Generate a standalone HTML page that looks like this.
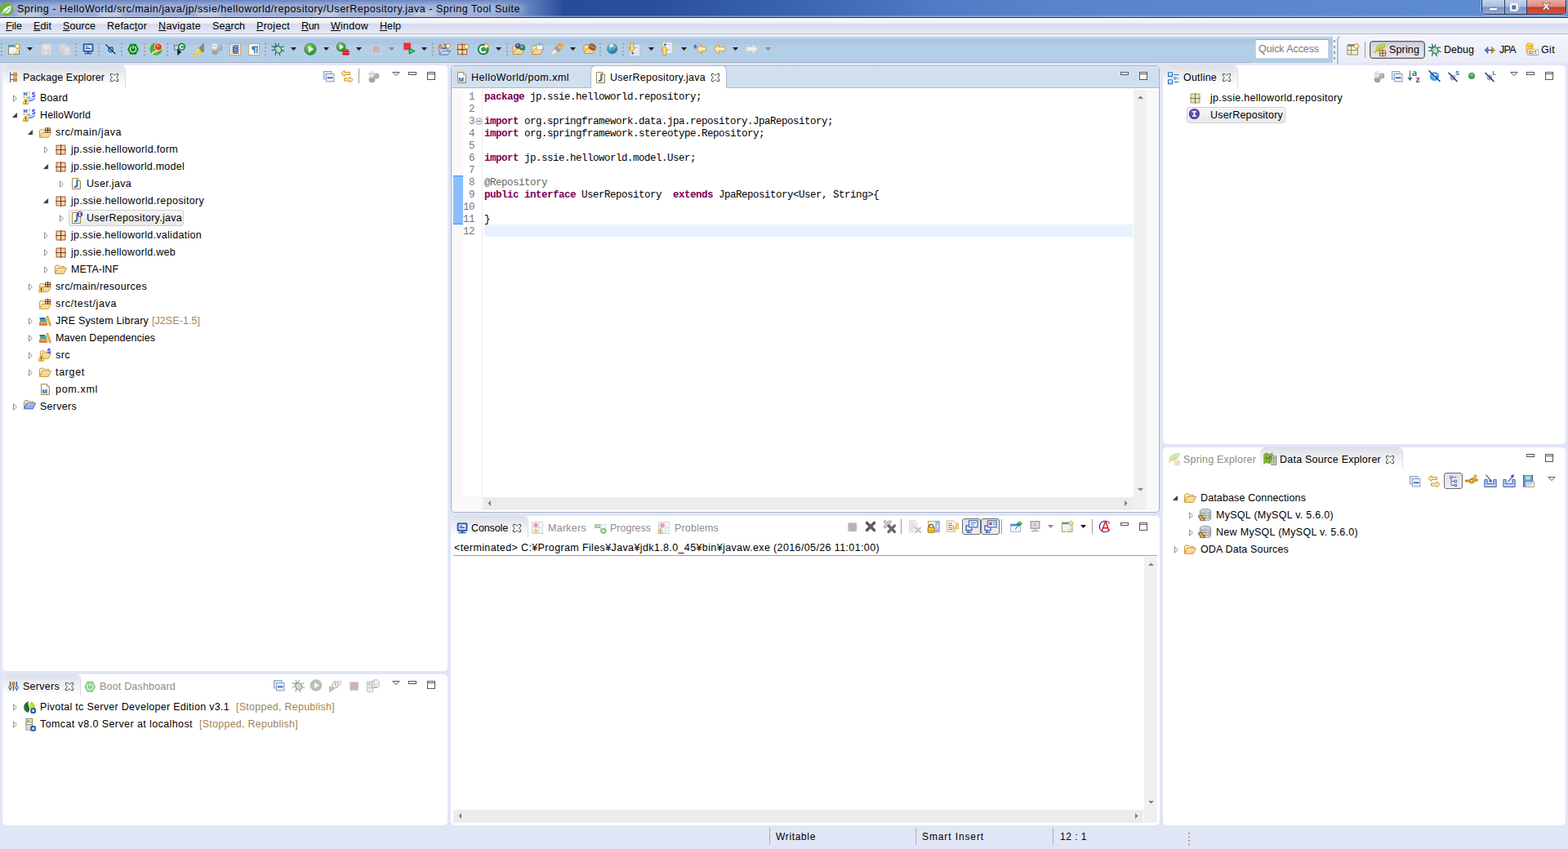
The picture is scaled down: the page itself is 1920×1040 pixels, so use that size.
<!DOCTYPE html>
<html><head><meta charset="utf-8"><title>Spring Tool Suite</title>
<style>
html,body{margin:0;padding:0}
body{width:1920px;height:1040px;overflow:hidden;background:#e1e6f6;position:relative;font-family:"Liberation Sans",sans-serif;font-size:12.5px;color:#000}
div,span,svg{position:absolute;box-sizing:border-box}
svg{overflow:visible}
.t{white-space:pre;line-height:16px;height:16px}
.t u{position:static;text-decoration:underline;text-underline-offset:1px}
.t b{position:static}
.panel{background:#fff;border-radius:5px}
.tab{background:linear-gradient(#dddfe8,#e6e8ee 25%,#f3f4f8 60%,#fff 96%);border-radius:6px 6px 0 0;box-shadow:1px 0 1px rgba(160,165,185,.4);clip-path:inset(-2px -3px 0 -3px)}
.dim{color:#8c8c8c}
.brown{color:#a08458}
.code{font-family:"Liberation Mono",monospace;font-size:12.5px;letter-spacing:-0.5px;white-space:pre;line-height:15px;height:15px;color:#000}
.code b{position:static;color:#7f0055;font-weight:bold}
.code i{position:static;color:#646464;font-style:normal}
.ln{font-family:"Liberation Mono",monospace;font-size:12.5px;letter-spacing:-0.5px;line-height:15px;height:15px;color:#787878;text-align:right;width:30px}
.sep{width:1px;background:#9a9a9a}
.hsep{width:2px;background-image:linear-gradient(#ab9f80 0 2px,transparent 2px 4.5px);background-size:2px 4.5px}

</style></head>
<body>
<div id="title" style="left:0;top:0;width:1920px;height:22px;background:linear-gradient(90deg,#8ea3d2 0,#93a8d6 600px,#5f7fbd 650px,#274c99 690px,#2a509d 800px,#3d68b3 1000px,#4f7cc4 1150px,#5885cc 1300px,#5f8dd3 1920px)"></div>
<div style="left:0;top:0;width:700px;height:7px;background:linear-gradient(rgba(70,100,175,.55),rgba(70,100,175,0));-webkit-mask-image:linear-gradient(90deg,#000 600px,transparent 690px);mask-image:linear-gradient(90deg,#000 600px,transparent 690px)"></div>
<div style="left:18px;top:5px;width:625px;height:13px;background:rgba(255,255,255,.2);filter:blur(4px)"></div>
<div style="left:22px;top:15px;width:28px;height:5px;background:rgba(255,250,225,.55);filter:blur(2.500px)"></div>
<div style="left:121px;top:15px;width:28px;height:5px;background:rgba(255,250,225,.55);filter:blur(2.500px)"></div>
<div style="left:241px;top:15px;width:28px;height:5px;background:rgba(255,250,225,.55);filter:blur(2.500px)"></div>
<div style="left:386px;top:15px;width:28px;height:5px;background:rgba(255,250,225,.55);filter:blur(2.500px)"></div>
<div style="left:506px;top:15px;width:28px;height:5px;background:rgba(255,250,225,.55);filter:blur(2.500px)"></div>
<div style="left:0;top:19px;width:1920px;height:1px;background:rgba(190,205,240,.3)"></div>
<div style="left:0;top:20px;width:1920px;height:1px;background:rgba(200,215,245,.55)"></div>
<div style="left:0;top:21px;width:1920px;height:1px;background:#1b2f5e"></div>
<svg style="left:-1px;top:2px" width="18" height="18" viewBox="0 0 18 18"><circle cx="9" cy="9" r="8.500" fill="#6db33f"/><path d="M3.800 13.200q1-6 10.700-8.200.6 6.500-3.500 8.800-3.700 1.600-7.200-.6z" fill="#fff"/><path d="M3.600 14.200q5.500-1 9.600-6.800" stroke="#6db33f" stroke-width="1.200" fill="none"/><circle cx="3.900" cy="14.100" r=".9" fill="#fff"/></svg>
<span class="t" style="left:21px;top:3px;letter-spacing:0.517px;color:#000;">Spring - HelloWorld/src/main/java/jp/ssie/helloworld/repository/UserRepository.java - Spring Tool Suite</span>
<div style="left:1814px;top:0;width:104px;height:18px;border:1px solid #1d2c52;border-top:none;border-radius:0 0 5px 5px;overflow:hidden;box-shadow:0 0 0 1px rgba(255,255,255,.45)"><div style="left:0;top:0;width:28px;height:17px;background:linear-gradient(#c5d3ec 0,#a9bde0 48%,#7c97c8 52%,#8fa9d6 100%);border-right:1px solid #2a3b66"></div><div style="left:28px;top:0;width:27px;height:17px;background:linear-gradient(#c5d3ec 0,#a9bde0 48%,#7c97c8 52%,#8fa9d6 100%);border-right:1px solid #2a3b66"></div><div style="left:55px;top:0;width:48px;height:17px;background:linear-gradient(#e9aca4 0,#d98a80 48%,#c23c2a 52%,#cf5a3e 100%)"></div></div>
<svg style="left:1823px;top:8.5px" width="11" height="5" viewBox="0 0 11 5"><rect x=".5" y=".5" width="10" height="3.400" rx=".6" fill="#fff" stroke="#5a6a8a" stroke-width=".8"/></svg>
<svg style="left:1849px;top:2px" width="12" height="12" viewBox="0 0 12 12"><rect x="3" y=".8" width="7.500" height="7.500" rx=".8" fill="none" stroke="#fff" stroke-width="1.800"/><rect x="3" y=".8" width="7.500" height="7.500" rx=".8" fill="none" stroke="#4a5a7a" stroke-width=".5"/><rect x="1" y="3.300" width="7.500" height="7.500" rx=".8" fill="#8fa8d4" stroke="#fff" stroke-width="1.900"/><rect x="3.300" y="5.600" width="3" height="3" fill="#5a76b0" stroke="#3a4a6a" stroke-width=".5"/></svg>
<svg style="left:1887px;top:2px" width="13" height="12" viewBox="0 0 13 12"><path d="M1.500 1.500h3l1.800 2.300L8.200 1.500h3L7.900 5.700l3.500 4.500h-3.100l-2-2.600-2 2.600h-3.100L4.700 5.700z" fill="#fff" stroke="#5a3a3a" stroke-width=".7"/></svg>
<div style="left:0;top:22px;width:1920px;height:19px;background:linear-gradient(#ffffff 0,#f3f4fb 4px,#eaecf7 7px,#d5d9ed 7px,#dde1f1 13px,#e5e8f6 19px)"></div>
<div style="left:0;top:41px;width:1920px;height:1px;background:#b5b8c9"></div>
<span class="t" style="left:7px;top:24px;letter-spacing:-0.035px"><u>F</u>ile</span>
<span class="t" style="left:41px;top:24px;letter-spacing:0.115px"><u>E</u>dit</span>
<span class="t" style="left:77px;top:24px;letter-spacing:0.066px"><u>S</u>ource</span>
<span class="t" style="left:131px;top:24px;letter-spacing:0.220px">Refac<u>t</u>or</span>
<span class="t" style="left:194px;top:24px;letter-spacing:0.333px"><u>N</u>avigate</span>
<span class="t" style="left:260px;top:24px;letter-spacing:0.066px">Se<u>a</u>rch</span>
<span class="t" style="left:314px;top:24px;letter-spacing:0.300px"><u>P</u>roject</span>
<span class="t" style="left:369px;top:24px;letter-spacing:-0.310px"><u>R</u>un</span>
<span class="t" style="left:405px;top:24px;letter-spacing:0.257px"><u>W</u>indow</span>
<span class="t" style="left:465px;top:24px;letter-spacing:0.073px"><u>H</u>elp</span>
<div style="left:0;top:42px;width:1632px;height:35px;background:linear-gradient(#fbfcfe 0,#e3edf7 2px,#c2d6ea 4px,#adc7e2 6px,#adc7e2 12.500px,#b3cee7 13px,#b3cee7 35px)"></div>
<div style="left:0;top:76px;width:1532px;height:1px;background:#a8afc6"></div>
<div style="left:1632px;top:42px;width:288px;height:36px;background:linear-gradient(#f4f5fb,#e9ecf7)"></div>
<div style="left:0;top:77px;width:1920px;height:3px;background:#e1e6f6"></div>
<div style="left:1537px;top:48px;width:90px;height:24px;background:#fff;border:1px solid #c9d3e2;border-top-color:#9aa7b8"></div>
<span class="t" style="left:1541px;top:52px;letter-spacing:-0.085px;color:#787878;">Quick Access</span>
<div style="left:1633px;top:48.500px;width:2px;height:24px;background-image:linear-gradient(#ab9f80 0 3px,transparent 3px 7px);background-size:2px 7px"></div>
<div style="left:1637px;top:44px;width:4px;height:34px;border-left:2px solid #a9c0e0;border-top:1px solid #a9c0e0;border-radius:4px 0 0 0"></div>
<div class="hsep" style="left:1px;top:52.500px;height:16px"></div>
<div class="hsep" style="left:92px;top:52.500px;height:16px"></div>
<div class="hsep" style="left:120px;top:52.500px;height:16px"></div>
<div class="hsep" style="left:148px;top:52.500px;height:16px"></div>
<div class="hsep" style="left:176px;top:52.500px;height:16px"></div>
<div class="hsep" style="left:204px;top:52.500px;height:16px"></div>
<div class="hsep" style="left:324px;top:52.500px;height:16px"></div>
<div class="hsep" style="left:529px;top:52.500px;height:16px"></div>
<div class="hsep" style="left:620px;top:52.500px;height:16px"></div>
<div class="hsep" style="left:734px;top:52.500px;height:16px"></div>
<div class="hsep" style="left:762px;top:52.500px;height:16px"></div>
<svg style="left:9px;top:52px" width="16" height="16" viewBox="0 0 16 16"><defs><linearGradient id="nw" x1="0" y1="0" x2="1" y2="1"><stop offset="0" stop-color="#fff"/><stop offset="1" stop-color="#d6e8fa"/></linearGradient></defs><rect x="1.5" y="3.5" width="13" height="11" fill="url(#nw)" stroke="#9a8346"/><rect x="2" y="3.5" width="9" height="2.2" fill="#3d9bdb"/><path d="M4 14.5q8-.5 10.5-7" fill="none" stroke="#efd27a" stroke-width="1.4"/><path d="M12.3 0.9999999999999996L15.9 4.6L12.3 8.2L8.700000000000001 4.6z" fill="#f3d680" stroke="#b48a22" stroke-width=".9" stroke-linejoin="round"/><path d="M12.3 2.3v4.6M10.000000000000002 4.6h4.6" stroke="#fffdf2" stroke-width="1.2"/></svg>
<svg style="left:48px;top:52px" width="16" height="16" viewBox="0 0 16 16"><g transform="translate(.6,.2)"><path d="M1.500 2.500q0-1 1-1h11q1 0 1 1v12q0 1-1 1h-11q-1 0-1-1z" fill="#dcdcdc" stroke="#c6c6c6"/><rect x="4" y="2" width="8" height="6" fill="#eeeeee" stroke="#cecece" stroke-width=".8"/><path d="M5.500 4h5M5.500 5.800h5" stroke="#d4d4d4" stroke-width=".8"/><rect x="5" y="10.500" width="6" height="4.500" fill="#e8e8e8" stroke="#c8c8c8" stroke-width=".8"/><rect x="8.200" y="11.500" width="1.500" height="2.600" fill="#c8c8c8"/></g></svg>
<svg style="left:72px;top:52px" width="16" height="16" viewBox="0 0 16 16"><g transform="translate(-.3,.8) scale(.7)"><path d="M1.500 2.500q0-1 1-1h11q1 0 1 1v12q0 1-1 1h-11q-1 0-1-1z" fill="#dcdcdc" stroke="#c6c6c6"/><rect x="4" y="2" width="8" height="6" fill="#eeeeee" stroke="#cecece" stroke-width=".8"/><path d="M5.500 4h5M5.500 5.800h5" stroke="#d4d4d4" stroke-width=".8"/><rect x="5" y="10.500" width="6" height="4.500" fill="#e8e8e8" stroke="#c8c8c8" stroke-width=".8"/><rect x="8.200" y="11.500" width="1.500" height="2.600" fill="#c8c8c8"/></g><g transform="translate(2.200,2.800) scale(.7)"><path d="M1.500 2.500q0-1 1-1h11q1 0 1 1v12q0 1-1 1h-11q-1 0-1-1z" fill="#dcdcdc" stroke="#c6c6c6"/><rect x="4" y="2" width="8" height="6" fill="#eeeeee" stroke="#cecece" stroke-width=".8"/><path d="M5.500 4h5M5.500 5.800h5" stroke="#d4d4d4" stroke-width=".8"/><rect x="5" y="10.500" width="6" height="4.500" fill="#e8e8e8" stroke="#c8c8c8" stroke-width=".8"/><rect x="8.200" y="11.500" width="1.500" height="2.600" fill="#c8c8c8"/></g><g transform="translate(4.500,4.800) scale(.7)"><path d="M1.500 2.500q0-1 1-1h11q1 0 1 1v12q0 1-1 1h-11q-1 0-1-1z" fill="#dcdcdc" stroke="#c6c6c6"/><rect x="4" y="2" width="8" height="6" fill="#eeeeee" stroke="#cecece" stroke-width=".8"/><path d="M5.500 4h5M5.500 5.800h5" stroke="#d4d4d4" stroke-width=".8"/><rect x="5" y="10.500" width="6" height="4.500" fill="#e8e8e8" stroke="#c8c8c8" stroke-width=".8"/><rect x="8.200" y="11.500" width="1.500" height="2.600" fill="#c8c8c8"/></g></svg>
<svg style="left:100px;top:52px" width="16" height="16" viewBox="0 0 16 16"><rect x="2" y="1.8" width="12" height="9.6" rx="1" fill="#2f5fae" stroke="#2a55a0" stroke-width=".8"/><rect x="3.6" y="3.3" width="8.8" height="6.4" fill="#f0f6ff"/><path d="M4.6 5.2h4M4.6 7.4h6.4" stroke="#2a3f8a" stroke-width="1.1"/><path d="M6.5 11.5h3v1.5h-3z" fill="#2f5fae"/><path d="M3.5 13.6h9" stroke="#2f5fae" stroke-width="1.4"/></svg>
<svg style="left:127px;top:52px" width="16" height="16" viewBox="0 0 16 16"><circle cx="8.6" cy="8.8" r="4.8" fill="#f4f8fc"/><circle cx="8.6" cy="8.8" r="3.3" fill="#78a8cf" stroke="#2a6a9c" stroke-width="1.3"/><path d="M2.2 2.4L14.2 14" stroke="#1d2c72" stroke-width="1.3"/></svg>
<svg style="left:155px;top:52px" width="16" height="16" viewBox="0 0 16 16"><path d="M1.2 8.2L4.6 1.8h6.8l3.4 6.4-3.4 6.6H4.6z" fill="#0b8a10"/><path d="M6 5.3a3.6 3.6 0 1 0 4 0" fill="none" stroke="#e8f6e8" stroke-width="1.2"/><path d="M8 3.6v4.2" stroke="#e8f6e8" stroke-width="1.3"/></svg>
<svg style="left:183px;top:52px" width="16" height="16" viewBox="0 0 16 16"><circle cx="8" cy="8.2" r="7.6" fill="#5aaa2e"/><path d="M3.6 11.6q5-1 9.6-5.5-1 6-5.5 7.4-2.6.6-4.1-1.900z" fill="#fff"/><path d="M4.2 13.2q5.400-.4 9-4.600" stroke="#5aaa2e" stroke-width="1.3" fill="none"/><circle cx="3.900" cy="13.200" r="1" fill="#fff"/><circle cx="11" cy="5.400" r="5" fill="#fff" opacity=".85"/><circle cx="11" cy="5.400" r="4.200" fill="#e2421c"/><circle cx="10.300" cy="4.200" r="1.800" fill="#f58a60" opacity=".8"/></svg>
<svg style="left:212px;top:52px" width="16" height="16" viewBox="0 0 16 16"><path d="M.6 3.500h6.800" stroke="#6a5aa0" stroke-width="1.100"/><path d="M1.600 3.800v5.400h5v-5.400" fill="#c8d8f0" stroke="#6a5aa0"/><path d="M2.500 2.500h3.200" stroke="#d8b0b0" stroke-width="1.100"/><path d="M5.200 7.500l5 4.300-5 4.300z" fill="#222"/><circle cx="10.500" cy="5.300" r="4.500" fill="#157a3a"/><circle cx="10.500" cy="5.300" r="3.300" fill="#39a85c"/><path d="M12.400 4.200a2.200 2.200 0 1 0 0 2.300" fill="none" stroke="#fff" stroke-width="1.300"/></svg>
<svg style="left:234px;top:52px" width="16" height="16" viewBox="0 0 16 16"><path d="M9.500 6.800L15.700.2l.3 10.800-3.200 1.200z" fill="#8c866c"/><path d="M12 5l2.500 3" stroke="#a8a490" stroke-width=".8"/><path d="M9.300 6.800l3.600 5.200-2.600 2.400-5.800.2z" fill="#f1d22c"/><path d="M9.400 7.800l-3.600 5.600" stroke="#f8e878" stroke-width="1.200"/><path d="M.2 14.800q3-1 5.800-.4l3 .2" stroke="#e8c820" stroke-width="1.300" fill="none"/></svg>
<svg style="left:258px;top:52px" width="16" height="16" viewBox="0 0 16 16"><circle cx="5.200" cy="5" r="3.600" fill="#ebebeb" stroke="#d8d8d8" stroke-width=".6"/><path d="M3.200 4.400h3.400" stroke="#b8b8b8"/><circle cx="11" cy="7" r="3.400" fill="#a9a9a9"/><circle cx="10.300" cy="5.800" r="1.500" fill="#c4c4c4"/><circle cx="5.500" cy="11.500" r="3.800" fill="#a2a2a2"/><path d="M3.500 9.300q2-1.500 4 0" stroke="#e4e4e4" stroke-width="1.200" fill="none"/></svg>
<svg style="left:280px;top:52px" width="16" height="16" viewBox="0 0 16 16"><rect x="1.500" y="1.500" width="13" height="14" fill="#fbfbfd" stroke="#c3ad6c" stroke-width="1.100"/><path d="M3.500 3.500h1M3.500 6h1M3.500 8.500h1M3.500 11h1M3.500 13.500h1M12 6h1M12 8.500h1M12 11h1" stroke="#2d4a9c" stroke-width="1.100"/><path d="M5.500 3.500h7.500M5.500 13.500h7.500" stroke="#5470b8" stroke-width="1.100"/><rect x="5.800" y="5.300" width="5" height="6.600" fill="#b9c9ea" stroke="#25408c" stroke-width="1.300"/><path d="M6.500 7.500h3.600M6.500 9.600h3.600" stroke="#25408c" stroke-width=".9"/></svg>
<svg style="left:303px;top:52px" width="16" height="16" viewBox="0 0 16 16"><rect x="1.500" y="1.500" width="13" height="14" fill="#fafcff" stroke="#c3ad6c" stroke-width="1.100"/><path d="M13 4.600H7.400a2.400 2.400 0 0 0 0 4.800H8V13.600h1.600V6h1.300v7.600h1.600V6H13z" fill="#3f7fc4"/></svg>
<svg style="left:332px;top:52px" width="16" height="16" viewBox="0 0 16 16"><path d="M5 1l1.200 3M9.300 1.400l-.8 2.600M.8 4.600l3.600 1M1.200 9.600l3.400-.8M12 5.300l3.200-.2M12.600 9l3 1.600M5.600 12l-.4 3.400M9.300 12.700l1.600 3" stroke="#225e5a" stroke-width="1.100" fill="none" stroke-linecap="round"/><ellipse cx="8.600" cy="8.600" rx="3.600" ry="4.700" transform="rotate(-38 8.600 8.600)" fill="#b4dba0" stroke="#26767a" stroke-width="1.200"/><path d="M7.300 7.200l3 3.600M9 6l2.400 3" stroke="#e0f2d4" stroke-width=".9"/><circle cx="5.800" cy="5" r="1.400" fill="#26767a"/></svg>
<svg style="left:372px;top:52px" width="16" height="16" viewBox="0 0 16 16"><defs><radialGradient id="rg" cx=".4" cy=".3" r=".8"><stop offset="0" stop-color="#8fd46a"/><stop offset=".6" stop-color="#3fa83c"/><stop offset="1" stop-color="#1f8a34"/></radialGradient></defs><circle cx="8" cy="8.300" r="7" fill="url(#rg)" stroke="#1c7c36" stroke-width=".8"/><path d="M5.800 4.300L12 8.300 5.800 12.400z" fill="#fff"/></svg>
<svg style="left:412px;top:52px" width="16" height="16" viewBox="0 0 16 16"><defs><radialGradient id="rg2" cx=".4" cy=".3" r=".8"><stop offset="0" stop-color="#8fd46a"/><stop offset=".6" stop-color="#3fa83c"/><stop offset="1" stop-color="#1f8a34"/></radialGradient></defs><circle cx="5.600" cy="5.600" r="5.400" fill="url(#rg2)" stroke="#1c7c36" stroke-width=".7"/><path d="M4 2.600L8.800 5.600 4 8.600z" fill="#fff"/><rect x="7.300" y="9.800" width="8.400" height="5.600" rx=".8" fill="#e21a1a"/><path d="M9.600 9.800v-1.300h3.800v1.300" fill="none" stroke="#e21a1a" stroke-width="1.100"/><path d="M7.300 12.300h8.400" stroke="#f8a0a0" stroke-width=".8"/><path d="M8.500 11h6M8.500 13.800h6" stroke="#a80c0c" stroke-width=".6"/></svg>
<svg style="left:453px;top:52px" width="16" height="16" viewBox="0 0 16 16"><rect x="2.600" y="3.600" width="10" height="10" fill="#c9b3bb" stroke="#dccfd0" stroke-width="1.200"/></svg>
<svg style="left:493px;top:52px" width="16" height="16" viewBox="0 0 16 16"><rect x="1.300" y=".5" width="8.600" height="8.600" rx=".8" fill="#e8202c" stroke="#f07078" stroke-width=".9"/><rect x="3" y="2.200" width="5.200" height="5.200" fill="#f04050" opacity=".6"/><path d="M8 6.800l7.200 3.700-7.200 3.700z" fill="#22a048" stroke="#15803a" stroke-width=".7"/><path d="M9.300 8.800l3.500 1.800-3.500 1.800z" fill="#6fd088"/></svg>
<svg style="left:536px;top:52px" width="16" height="16" viewBox="0 0 16 16"><path d="M2 13.800V9l1.500-1.200h8.500v2" fill="#fbe9b0" stroke="#4a66c0" stroke-width=".9"/><path d="M2 15l3-4.600h10.700l-3.300 4.600z" fill="#b9d6f6" stroke="#4a66c0" stroke-width=".9" stroke-linejoin="round"/><text x="-.2" y="8.200" font-family="Liberation Sans,sans-serif" font-weight="bold" font-size="9.500" fill="#e06a10">A</text><text x="5.600" y="8.200" font-family="Liberation Sans,sans-serif" font-weight="bold" font-size="9.500" fill="#1f5fb0">J</text><path d="M12.6 0.8999999999999999L16.0 4.3L12.6 7.699999999999999L9.2 4.3z" fill="#f3d680" stroke="#b48a22" stroke-width=".9" stroke-linejoin="round"/><path d="M12.6 2.2v4.199999999999999M10.5 4.3h4.199999999999999" stroke="#fffdf2" stroke-width="1.2"/></svg>
<svg style="left:560px;top:52px" width="16" height="16" viewBox="0 0 16 16"><rect x=".6" y="2.600" width="11" height="12" fill="#e9c48e" stroke="#b0623e"/><rect x="1.600" y="3.600" width="4" height="4.500" fill="#f3dcae"/><rect x="6.600" y="3.600" width="4" height="4.500" fill="#f3dcae"/><rect x="1.600" y="9.100" width="4" height="4.500" fill="#f3dcae"/><rect x="6.600" y="9.100" width="4" height="4.500" fill="#f3dcae"/><path d="M6.100 1.500v14M-.5 8.600h12.500" stroke="#7a3a2a" stroke-width="1.100"/><path d="M11.4 1.5L14.9 5L11.4 8.5L7.9 5z" fill="#f3d680" stroke="#b48a22" stroke-width=".9" stroke-linejoin="round"/><path d="M11.4 2.8v4.4M9.200000000000001 5h4.4" stroke="#fffdf2" stroke-width="1.2"/></svg>
<svg style="left:584px;top:52px" width="16" height="16" viewBox="0 0 16 16"><circle cx="7.700" cy="8.500" r="6.800" fill="#127a36"/><circle cx="7.700" cy="8.500" r="5.600" fill="#2f9f52"/><path d="M10.600 6.400a3.700 3.700 0 1 0 0 4.200" fill="none" stroke="#fff" stroke-width="2.100"/><path d="M11.4 1.0L14.9 4.5L11.4 8.0L7.9 4.5z" fill="#f3d680" stroke="#b48a22" stroke-width=".9" stroke-linejoin="round"/><path d="M11.4 2.3v4.4M9.200000000000001 4.5h4.4" stroke="#fffdf2" stroke-width="1.2"/></svg>
<svg style="left:627px;top:52px" width="16" height="16" viewBox="0 0 16 16"><path d="M1 12.500V5.500l1.200-1.300h3.600l1.200 1.300h5.500v2" fill="#fbe6a8" stroke="#cf8e2e"/><path d="M1 14.500L4.600 8h11l-3.800 6.500z" fill="#f8d88a" stroke="#cf8e2e" stroke-linejoin="round"/><path d="M5.200 9h9" stroke="#fdf0c8"/><circle cx="7.300" cy="4.300" r="3.400" fill="#5a3fa0"/><circle cx="6.800" cy="3.300" r="1.600" fill="#9a86d0"/><circle cx="12.500" cy="6.200" r="3.600" fill="#1f8a4a"/><circle cx="12" cy="5.200" r="1.700" fill="#6cc890"/></svg>
<svg style="left:650px;top:52px" width="16" height="16" viewBox="0 0 16 16"><path d="M1 12.500V5.500l1.200-1.300h3.600l1.200 1.300h5.500v2" fill="#fbe6a8" stroke="#cf8e2e"/><path d="M1 14.500L4.600 8h11l-3.800 6.500z" fill="#f8d88a" stroke="#cf8e2e" stroke-linejoin="round"/><path d="M5.200 9h9" stroke="#fdf0c8"/><rect x="7" y="2.500" width="7.500" height="6.500" fill="#f2f6fc" stroke="#8aa0c0" stroke-width=".9"/><rect x="9" y="1" width="3.400" height="2.200" fill="#b8c6e0" stroke="#7f90b4" stroke-width=".7"/></svg>
<svg style="left:674px;top:52px" width="16" height="16" viewBox="0 0 16 16"><path d="M.6 14.200L5.500 8l3.400 3.600-6 3.600z" fill="#fff6c8"/><path d="M.6 14.200l2.200 1 6-3.600" fill="#f0c040" opacity=".6"/><path d="M5 7.600l2.600-2.800 4.400 4.400-2.800 2.600z" fill="#a7a0a6" stroke="#857e86" stroke-width=".7"/><path d="M7.600 4.800L12.300.8l3.300 1.400.2 2.400-3.800 4.600z" fill="#f4c254" stroke="#c88a20" stroke-width=".8"/><path d="M11.300 3.300l1.200 1" stroke="#2a50b0" stroke-width="1.300"/></svg>
<svg style="left:714px;top:52px" width="16" height="16" viewBox="0 0 16 16"><path d="M1 11.500V4.500l1.200-1.300h3.600l1.200 1.300h5.500v2" fill="#fbe6a8" stroke="#cf8e2e"/><path d="M1 13.500L4.600 7h11l-3.800 6.500z" fill="#f8d88a" stroke="#cf8e2e" stroke-linejoin="round"/><ellipse cx="11.200" cy="5.600" rx="4.300" ry="3.500" transform="rotate(25 11.200 5.600)" fill="#9c6038" stroke="#7a4524" stroke-width=".7"/><path d="M7.600 4.600q3.600-.6 7 2.600" stroke="#d8a878" stroke-width="1" fill="none"/></svg>
<svg style="left:742px;top:52px" width="16" height="16" viewBox="0 0 16 16"><defs><radialGradient id="gl" cx=".4" cy=".35" r=".75"><stop offset="0" stop-color="#7fd0f4"/><stop offset=".6" stop-color="#2a8ad0"/><stop offset="1" stop-color="#1a4fa0"/></radialGradient></defs><circle cx="7.600" cy="7.600" r="6.600" fill="url(#gl)" stroke="#c8b890" stroke-width=".6"/><path d="M4.300 3q2-1.600 4.600-1 1 1.600-.4 2.600l1.600 1.200-1 2.400-1.500-.3-1.100-2-2.600-.6z" fill="#d8f0d0"/><path d="M7.300 5.200l2.200 1-.6 3-1.400 1.600-.8-3z" fill="#4aa83a"/><circle cx="7.800" cy="10.300" r=".8" fill="#e02020"/><path d="M10.500 3.500l1.500 1.700-.8 1.300" fill="#c8ecc0"/></svg>
<svg style="left:769px;top:52px" width="16" height="16" viewBox="0 0 16 16"><rect x="2.800" y="3.300" width="12" height="12.400" fill="#f1f4f9"/><path d="M14.800 3.300v12.400" stroke="#c9ba86" stroke-width=".9"/><path d="M9.500 5.500h4M10 8h4M8.500 10.500h2.500M11.800 10.500h2.200M8.500 13.300h5.500" stroke="#c6cfe0" stroke-width="1"/><rect x="4.300" y="12.300" width="3" height="2" fill="#2f5fb0"/><path d="M3.400.7h3.400v5.500h2.800L5.100 11.800.6 6.200h2.800z" fill="#fbd66a" stroke="#cf8e20" stroke-width=".9" stroke-linejoin="round"/><path d="M4.400 1.500v5.400" stroke="#fff3c0" stroke-width="1"/></svg>
<svg style="left:808px;top:52px" width="16" height="16" viewBox="0 0 16 16"><rect x="3.300" y=".3" width="12" height="12.400" fill="#f1f4f9"/><path d="M3.300 .3v12.400M15.300 .3v12.400" stroke="#c9ba86" stroke-width=".9"/><rect x="5" y="1.600" width="3" height="2" fill="#2f5fb0"/><path d="M9.500 2.600h4.500M9.500 5.200h2M12.500 5.200h1.500M11 7.800h3M12 10.300h2" stroke="#c6cfe0" stroke-width="1"/><path d="M4.200 15.500h3.400v-5.700h2.800L5.900 4.300 1.400 9.800h2.800z" fill="#fbd66a" stroke="#cf8e20" stroke-width=".9" stroke-linejoin="round"/><path d="M5.200 14.600v-6.500" stroke="#fff3c0" stroke-width="1"/></svg>
<svg style="left:849px;top:52px" width="16" height="16" viewBox="0 0 16 16"><path d="M4.3 8.200L9.8 2.400v3.300h5.5v5H9.8V14z" fill="#fde7a2" stroke="#d6962a" stroke-width="1" stroke-linejoin="round"/><path d="M8 7h6.5" stroke="#fff8dc" stroke-width="1.200"/><path d="M2.400 2.300v5.400M.2 3.600l4.400 2.800M.2 6.400L4.600 3.600" stroke="#2a5fc0" stroke-width=".9"/></svg>
<svg style="left:873px;top:52px" width="16" height="16" viewBox="0 0 16 16"><path d="M1.2 8.200L7.2 2.400v3.300h7.8v5H7.2V14z" fill="#fde7a2" stroke="#d6962a" stroke-width="1" stroke-linejoin="round"/><path d="M5.5 7h8.5" stroke="#fff8dc" stroke-width="1.200"/></svg>
<svg style="left:913px;top:52px" width="16" height="16" viewBox="0 0 16 16"><g transform="translate(16,0) scale(-1,1)"><path d="M1.2 8.200L7.2 2.400v3.300h7.8v5H7.2V14z" fill="#ececec" stroke="#d2d2d2" stroke-width="1" stroke-linejoin="round"/><path d="M5.5 7h8.5" stroke="#fafafa" stroke-width="1.200"/></g></svg>
<svg style="left:33px;top:58px" width="7" height="4" viewBox="0 0 7 4"><path d="M0 0h7L3.5 4z" fill="#1a1a1a"/></svg>
<svg style="left:356px;top:58px" width="7" height="4" viewBox="0 0 7 4"><path d="M0 0h7L3.5 4z" fill="#1a1a1a"/></svg>
<svg style="left:396px;top:58px" width="7" height="4" viewBox="0 0 7 4"><path d="M0 0h7L3.5 4z" fill="#1a1a1a"/></svg>
<svg style="left:436px;top:58px" width="7" height="4" viewBox="0 0 7 4"><path d="M0 0h7L3.5 4z" fill="#1a1a1a"/></svg>
<svg style="left:516px;top:58px" width="7" height="4" viewBox="0 0 7 4"><path d="M0 0h7L3.5 4z" fill="#1a1a1a"/></svg>
<svg style="left:607px;top:58px" width="7" height="4" viewBox="0 0 7 4"><path d="M0 0h7L3.5 4z" fill="#1a1a1a"/></svg>
<svg style="left:698px;top:58px" width="7" height="4" viewBox="0 0 7 4"><path d="M0 0h7L3.5 4z" fill="#1a1a1a"/></svg>
<svg style="left:794px;top:58px" width="7" height="4" viewBox="0 0 7 4"><path d="M0 0h7L3.5 4z" fill="#1a1a1a"/></svg>
<svg style="left:834px;top:58px" width="7" height="4" viewBox="0 0 7 4"><path d="M0 0h7L3.5 4z" fill="#1a1a1a"/></svg>
<svg style="left:897px;top:58px" width="7" height="4" viewBox="0 0 7 4"><path d="M0 0h7L3.5 4z" fill="#1a1a1a"/></svg>
<svg style="left:476px;top:58px" width="7" height="4" viewBox="0 0 7 4"><path d="M0 0h7L3.5 4z" fill="#8a8a8a"/></svg>
<svg style="left:937px;top:58px" width="7" height="4" viewBox="0 0 7 4"><path d="M0 0h7L3.5 4z" fill="#8a8a8a"/></svg>
<svg style="left:1649px;top:52px" width="16" height="16" viewBox="0 0 16 16"><rect x="1" y="2.500" width="12.500" height="12.500" rx="1" fill="#eef5fc" stroke="#a58a48" stroke-width="1.100"/><rect x="1.500" y="3" width="8" height="2" fill="#4a9adc"/><path d="M5.500 5v10M1 9.500h12.500" stroke="#a58a48" stroke-width="1"/><path d="M7 13.500l4-3.500" stroke="#efd27a" stroke-width="1"/><path d="M11.8 0.8999999999999999L15.4 4.5L11.8 8.1L8.200000000000001 4.5z" fill="#f3d680" stroke="#b48a22" stroke-width=".9" stroke-linejoin="round"/><path d="M11.8 2.2v4.6M9.500000000000002 4.5h4.6" stroke="#fffdf2" stroke-width="1.2"/></svg>
<div class="sep" style="left:1671px;top:51px;height:20px;background:#9a9aa6"></div>
<div style="left:1677px;top:50px;width:68px;height:22px;border:1px solid #5c5c5c;border-radius:4px;box-shadow:inset 0 0 0 .5px #8a8a8a;background:linear-gradient(#cdcdd4,#dedee5 45%,#e6e6ee)"></div>
<svg style="left:1682px;top:53px" width="16" height="16" viewBox="0 0 16 16"><path d="M2.500 9.500q-.8-5 4-7.800 4-1.900 8.500-.9-.5 5.200-4.500 7.600-4.500 2.400-8 1.100z" fill="#a9d14c"/><path d="M4 8q3-4.500 9-6" stroke="#c8e47a" stroke-width="1" fill="none"/><path d="M.5 12l8-6.500" stroke="#e78f3a" stroke-width="1.200"/><rect x="7.500" y="9" width="7" height="6.500" fill="#f3dcae" stroke="#b0623e" stroke-width=".9"/><path d="M11 8v8.500M6.500 12.300h9" stroke="#8a4a2a" stroke-width="1.100"/></svg>
<span class="t" style="left:1701px;top:53px;letter-spacing:0.145px;">Spring</span>
<svg style="left:1749px;top:53px" width="16" height="16" viewBox="0 0 16 16"><g transform="translate(-.5,0)"><path d="M5 1l1.200 3M9.300 1.400l-.8 2.600M.8 4.600l3.600 1M1.200 9.600l3.400-.8M12 5.300l3.200-.2M12.600 9l3 1.600M5.600 12l-.4 3.400M9.300 12.700l1.600 3" stroke="#225e5a" stroke-width="1.100" fill="none" stroke-linecap="round"/><ellipse cx="8.600" cy="8.600" rx="3.600" ry="4.700" transform="rotate(-38 8.600 8.600)" fill="#b4dba0" stroke="#26767a" stroke-width="1.200"/><path d="M7.300 7.200l3 3.600M9 6l2.400 3" stroke="#e0f2d4" stroke-width=".9"/><circle cx="5.800" cy="5" r="1.400" fill="#26767a"/></g></svg>
<span class="t" style="left:1768px;top:53px;letter-spacing:0.034px;">Debug</span>
<svg style="left:1817px;top:53px" width="15" height="16" viewBox="0 0 15 16"><path d="M5 4.500L.8 8.500 5 12.500z" fill="#5a8acc" stroke="#2a5a9c" stroke-width=".7"/><path d="M9.500 4.500l4.200 4-4.200 4z" fill="#d9a044" stroke="#a8701a" stroke-width=".7"/><path d="M4 8.500h7" stroke="#2a4a8a" stroke-width="1.200"/></svg>
<span class="t" style="left:1836px;top:53px;letter-spacing:-0.666px;">JPA</span>
<svg style="left:1868px;top:52px" width="17" height="17" viewBox="0 0 17 17"><path d="M1 2.500v10h8v-10" fill="#f2c436" stroke="#c89a1a" stroke-width=".7"/><ellipse cx="5" cy="2.500" rx="4" ry="1.700" fill="#fbe070" stroke="#c89a1a" stroke-width=".7"/><path d="M2.500 4.500v7" stroke="#fbe68a" stroke-width="1.500"/><rect x="2.500" y="8.500" width="13" height="7" fill="#fcfcfc" stroke="#a8b0c0" stroke-width=".8"/><path d="M2.500 15.200h13" stroke="#9aa8c0" stroke-width="1.200"/><text x="3.700" y="14" font-family="Liberation Sans,sans-serif" font-weight="bold" font-size="5.500" fill="#555">G</text><text x="8.200" y="14" font-family="Liberation Sans,sans-serif" font-weight="bold" font-size="5.500" fill="#d03030">I</text><text x="10.300" y="14" font-family="Liberation Sans,sans-serif" font-weight="bold" font-size="5.500" fill="#2a9a3a">T</text></svg>
<span class="t" style="left:1887px;top:53px;letter-spacing:0.342px;">Git</span>
<div class="panel" style="left:3px;top:80px;width:545px;height:742px"></div>
<div class="tab" style="left:3px;top:80px;width:150px;height:27px"></div>
<svg style="left:10px;top:88px" width="16" height="16" viewBox="0 0 16 16"><path d="M2.500 0v13M3 3.500h3M3 9.500h3" stroke="#5a6070" fill="none"/><rect x="6" y="1" width="5" height="5" fill="#c27532"/><rect x="6" y="7" width="5" height="5" fill="#c27532"/><path d="M7.500 2.500h.01M9.500 2.500h.01M7.500 4.500h.01M9.500 4.500h.01M7.500 8.500h.01M9.500 8.500h.01M7.500 10.500h.01M9.500 10.500h.01" stroke="#f6dcae" stroke-width="1.100" stroke-linecap="square"/></svg>
<span class="t" style="left:28px;top:87px;letter-spacing:0.084px;">Package Explorer</span>
<svg style="left:135px;top:90px" width="10" height="10" viewBox="0 0 10 10"><path d="M.5 .5h2.600l2 2 2-2h2.400v2.500l-2 2 2 2v2.500h-2.400l-2-2-2 2H.5v-2.500l2-2-2-2z" fill="#fff" stroke="#4a4a4a" stroke-width="1" stroke-linejoin="round"/></svg>
<svg style="left:396px;top:87px" width="14" height="14" viewBox="0 0 14 14"><rect x=".5" y=".5" width="9.500" height="9.500" fill="#dbe7f3" stroke="#8f9fc6"/><rect x="3.500" y="3.500" width="9.500" height="9.500" fill="#e3f0f4" stroke="#8f9fc6"/><path d="M5 8.300h6.500" stroke="#103f95" stroke-width="1.300"/></svg>
<svg style="left:417px;top:86px" width="16" height="16" viewBox="0 0 16 16"><path d="M.8 4L4.800 .5v2h6.700v3H4.800v2z" fill="#fdf0c0" stroke="#d09422" stroke-width="1" stroke-linejoin="round"/><path d="M15.200 11.500L11.200 8v2H4.500v3h6.700v2z" fill="#fdf0c0" stroke="#d09422" stroke-width="1" stroke-linejoin="round"/></svg>
<div class="sep" style="left:439px;top:84px;height:18px"></div>
<svg style="left:450px;top:86px" width="16" height="16" viewBox="0 0 16 16"><circle cx="5.200" cy="5" r="3.600" fill="#ebebeb" stroke="#d8d8d8" stroke-width=".6"/><path d="M3.200 4.400h3.400" stroke="#b8b8b8"/><circle cx="11" cy="7" r="3.400" fill="#a9a9a9"/><circle cx="10.300" cy="5.800" r="1.500" fill="#c4c4c4"/><circle cx="5.500" cy="11.500" r="3.800" fill="#a2a2a2"/><path d="M3.500 9.300q2-1.500 4 0" stroke="#e4e4e4" stroke-width="1.200" fill="none"/></svg>
<svg style="left:480px;top:88px" width="10" height="6" viewBox="0 0 10 6"><path d="M.8 .5h8.400L5 4.600z" fill="#fff" stroke="#555" stroke-width="1" stroke-linejoin="round"/></svg>
<svg style="left:500px;top:88px" width="10" height="4" viewBox="0 0 10 4"><rect x=".5" y=".5" width="9" height="3" fill="#fff" stroke="#555"/></svg>
<svg style="left:523px;top:88px" width="10" height="10" viewBox="0 0 10 10"><rect x=".5" y=".5" width="9" height="9" fill="#fff" stroke="#555"/><path d="M1 2.500h8" stroke="#555"/></svg>
<svg style="left:15px;top:116px" width="7" height="9" viewBox="0 0 7 9"><path d="M1.5 .8v7.4L5.3 4.5z" fill="#fff" stroke="#8c8c8c" stroke-width="1"/></svg>
<svg style="left:28px;top:111px" width="16" height="16" viewBox="0 0 16 16"><path d="M7 2.700h2v4.500H7z" fill="#fbe3a0"/><path d="M2.300 7.300h3v2h-3z" fill="#fbe3a0"/><path d="M1.300 7.200v1.600" stroke="#2a5ab0" stroke-width=".9"/><path d="M7.600 1.200l1.200 1.600" stroke="#6a7a9a" stroke-width=".9"/><path d="M5 8.700l3.500-1.200.5 1 6 .5-3.600 3.800H7z" fill="#a9d0f7"/><path d="M5 8.700l3.500-1.200" stroke="#4a78c8" stroke-width=".8" fill="none"/><path d="M7 12.600h4.400L15 9" stroke="#3458c6" stroke-width=".9" fill="none"/><text transform="translate(.6,5.800) scale(1.180,1)" font-family="Liberation Sans,sans-serif" font-weight="bold" font-size="5.300" fill="#0f5a96">M</text><text transform="translate(10.700,7.900) scale(.680,1)" font-family="Liberation Sans,sans-serif" font-weight="bold" font-size="9.700" fill="#0000f0">S</text><g transform="translate(0,9.300)"><path d="M3.500 .6Q4.200 .6 4.600 1.500L6.800 6q.5 1.600-1 1.600H1.200q-1.500 0-1-1.600L2.400 1.500Q2.800 .6 3.500 .6z" fill="#f6c860" stroke="#d99a3a" stroke-width=".8"/><path d="M3.500 2.300v2.700M3.500 5.800v1" stroke="#5a3208" stroke-width="1.100"/></g></svg>
<span class="t" style="left:49px;top:112px;letter-spacing:0.129px;">Board</span>
<svg style="left:15px;top:138px" width="7" height="7" viewBox="0 0 7 7"><path d="M5.700 .6v5.100H.6z" fill="#3a3a3a" stroke="#262626" stroke-width=".6" stroke-linejoin="round"/></svg>
<svg style="left:28px;top:132px" width="16" height="16" viewBox="0 0 16 16"><path d="M7 2.700h2v4.500H7z" fill="#fbe3a0"/><path d="M2.300 7.300h3v2h-3z" fill="#fbe3a0"/><path d="M1.300 7.200v1.600" stroke="#2a5ab0" stroke-width=".9"/><path d="M7.600 1.200l1.200 1.600" stroke="#6a7a9a" stroke-width=".9"/><path d="M5 8.700l3.500-1.200.5 1 6 .5-3.600 3.800H7z" fill="#a9d0f7"/><path d="M5 8.700l3.500-1.200" stroke="#4a78c8" stroke-width=".8" fill="none"/><path d="M7 12.600h4.400L15 9" stroke="#3458c6" stroke-width=".9" fill="none"/><text transform="translate(.6,5.800) scale(1.180,1)" font-family="Liberation Sans,sans-serif" font-weight="bold" font-size="5.300" fill="#0f5a96">M</text><text transform="translate(10.700,7.900) scale(.680,1)" font-family="Liberation Sans,sans-serif" font-weight="bold" font-size="9.700" fill="#0000f0">S</text><g transform="translate(0,9.300)"><path d="M3.500 .6Q4.200 .6 4.600 1.500L6.800 6q.5 1.600-1 1.600H1.200q-1.500 0-1-1.600L2.400 1.500Q2.800 .6 3.500 .6z" fill="#f6c860" stroke="#d99a3a" stroke-width=".8"/><path d="M3.500 2.300v2.700M3.500 5.800v1" stroke="#5a3208" stroke-width="1.100"/></g></svg>
<span class="t" style="left:49px;top:133px;letter-spacing:0.110px;">HelloWorld</span>
<svg style="left:34px;top:159px" width="7" height="7" viewBox="0 0 7 7"><path d="M5.700 .6v5.100H.6z" fill="#3a3a3a" stroke="#262626" stroke-width=".6" stroke-linejoin="round"/></svg>
<svg style="left:47px;top:153px" width="16" height="16" viewBox="0 0 16 16"><path d="M1.500 14.500V7l1.200-1.400h3.600l1.200 1.400h5v2" fill="#fbeec4" stroke="#cf9a40"/><path d="M1.500 15.300L4.600 9.500h10.900l-3.300 5.800z" fill="#f8de98" stroke="#cf9a40" stroke-linejoin="round"/><rect x="8.500" y="4" width="6" height="5" fill="#ecc894" stroke="#8a5a44" stroke-width=".9"/><path d="M11.500 2.800v7M7.500 6.500h8" stroke="#6a3a2c" stroke-width="1"/></svg>
<span class="t" style="left:68px;top:154px;letter-spacing:0.567px;">src/main/java</span>
<svg style="left:53px;top:179px" width="7" height="9" viewBox="0 0 7 9"><path d="M1.5 .8v7.4L5.3 4.5z" fill="#fff" stroke="#8c8c8c" stroke-width="1"/></svg>
<svg style="left:66px;top:174px" width="16" height="16" viewBox="0 0 16 16"><rect x="3" y="4" width="11" height="11" fill="#e3b982" stroke="#b0623e"/><rect x="4" y="5" width="4" height="4" fill="#f1d8a8"/><rect x="9" y="5" width="4" height="4" fill="#f1d8a8"/><rect x="4" y="10" width="4" height="4" fill="#f1d8a8"/><rect x="9" y="10" width="4" height="4" fill="#f1d8a8"/><path d="M8.500 3v13M2 9.500h13" stroke="#7a3a2a" stroke-width="1.100"/></svg>
<span class="t" style="left:87px;top:175px;letter-spacing:0.320px;">jp.ssie.helloworld.form</span>
<svg style="left:53px;top:201px" width="7" height="7" viewBox="0 0 7 7"><path d="M5.700 .6v5.100H.6z" fill="#3a3a3a" stroke="#262626" stroke-width=".6" stroke-linejoin="round"/></svg>
<svg style="left:66px;top:195px" width="16" height="16" viewBox="0 0 16 16"><rect x="3" y="4" width="11" height="11" fill="#e3b982" stroke="#b0623e"/><rect x="4" y="5" width="4" height="4" fill="#f1d8a8"/><rect x="9" y="5" width="4" height="4" fill="#f1d8a8"/><rect x="4" y="10" width="4" height="4" fill="#f1d8a8"/><rect x="9" y="10" width="4" height="4" fill="#f1d8a8"/><path d="M8.500 3v13M2 9.500h13" stroke="#7a3a2a" stroke-width="1.100"/></svg>
<span class="t" style="left:87px;top:196px;letter-spacing:0.263px;">jp.ssie.helloworld.model</span>
<svg style="left:72px;top:221px" width="7" height="9" viewBox="0 0 7 9"><path d="M1.5 .8v7.4L5.3 4.5z" fill="#fff" stroke="#8c8c8c" stroke-width="1"/></svg>
<svg style="left:85px;top:216px" width="16" height="16" viewBox="0 0 16 16"><defs><linearGradient id="pg" x1="0" y1="0" x2="1" y2="1"><stop offset=".3" stop-color="#fff"/><stop offset="1" stop-color="#cfe0f5"/></linearGradient></defs><path d="M3.5 2.5h7l3 3v10h-10z" fill="url(#pg)" stroke="#a88a3c"/><path d="M10.5 2.5v3h3" fill="#f2e2b0" stroke="#a88a3c" stroke-width=".8"/><path d="M9.3 4.2v6.3q0 2.4-2.4 2.4h-1" fill="none" stroke="#3b6db0" stroke-width="2"/></svg>
<span class="t" style="left:106px;top:217px;letter-spacing:0.322px;">User.java</span>
<svg style="left:53px;top:243px" width="7" height="7" viewBox="0 0 7 7"><path d="M5.700 .6v5.100H.6z" fill="#3a3a3a" stroke="#262626" stroke-width=".6" stroke-linejoin="round"/></svg>
<svg style="left:66px;top:237px" width="16" height="16" viewBox="0 0 16 16"><rect x="3" y="4" width="11" height="11" fill="#e3b982" stroke="#b0623e"/><rect x="4" y="5" width="4" height="4" fill="#f1d8a8"/><rect x="9" y="5" width="4" height="4" fill="#f1d8a8"/><rect x="4" y="10" width="4" height="4" fill="#f1d8a8"/><rect x="9" y="10" width="4" height="4" fill="#f1d8a8"/><path d="M8.500 3v13M2 9.500h13" stroke="#7a3a2a" stroke-width="1.100"/></svg>
<span class="t" style="left:87px;top:238px;letter-spacing:0.327px;">jp.ssie.helloworld.repository</span>
<div style="left:84px;top:257px;width:141px;height:20px;border:1px solid #d0d0d0;border-radius:3px;background:linear-gradient(#f6f6f6,#e9e9e9)"></div>
<svg style="left:72px;top:263px" width="7" height="9" viewBox="0 0 7 9"><path d="M1.5 .8v7.4L5.3 4.5z" fill="#fff" stroke="#8c8c8c" stroke-width="1"/></svg>
<svg style="left:85px;top:258px" width="16" height="16" viewBox="0 0 16 16"><defs><linearGradient id="pg2" x1="0" y1="0" x2="1" y2="1"><stop offset=".3" stop-color="#fff"/><stop offset="1" stop-color="#cfe0f5"/></linearGradient></defs><path d="M3.5 2.5h10v13h-10z" fill="url(#pg2)" stroke="#a88a3c"/><path d="M9.3 4.2v6.3q0 2.4-2.4 2.4h-1" fill="none" stroke="#3b6db0" stroke-width="2"/><circle cx="12.7" cy="4.2" r="3.5" fill="#5b3fa8"/><path d="M11.3 2.5h2.8M11.3 5.9h2.8M12.7 2.5v3.4" stroke="#fff" stroke-width="1.1"/></svg>
<span class="t" style="left:106px;top:259px;letter-spacing:0.284px;">UserRepository.java</span>
<svg style="left:53px;top:284px" width="7" height="9" viewBox="0 0 7 9"><path d="M1.5 .8v7.4L5.3 4.5z" fill="#fff" stroke="#8c8c8c" stroke-width="1"/></svg>
<svg style="left:66px;top:279px" width="16" height="16" viewBox="0 0 16 16"><rect x="3" y="4" width="11" height="11" fill="#e3b982" stroke="#b0623e"/><rect x="4" y="5" width="4" height="4" fill="#f1d8a8"/><rect x="9" y="5" width="4" height="4" fill="#f1d8a8"/><rect x="4" y="10" width="4" height="4" fill="#f1d8a8"/><rect x="9" y="10" width="4" height="4" fill="#f1d8a8"/><path d="M8.500 3v13M2 9.500h13" stroke="#7a3a2a" stroke-width="1.100"/></svg>
<span class="t" style="left:87px;top:280px;letter-spacing:0.294px;">jp.ssie.helloworld.validation</span>
<svg style="left:53px;top:305px" width="7" height="9" viewBox="0 0 7 9"><path d="M1.5 .8v7.4L5.3 4.5z" fill="#fff" stroke="#8c8c8c" stroke-width="1"/></svg>
<svg style="left:66px;top:300px" width="16" height="16" viewBox="0 0 16 16"><rect x="3" y="4" width="11" height="11" fill="#e3b982" stroke="#b0623e"/><rect x="4" y="5" width="4" height="4" fill="#f1d8a8"/><rect x="9" y="5" width="4" height="4" fill="#f1d8a8"/><rect x="4" y="10" width="4" height="4" fill="#f1d8a8"/><rect x="9" y="10" width="4" height="4" fill="#f1d8a8"/><path d="M8.500 3v13M2 9.500h13" stroke="#7a3a2a" stroke-width="1.100"/></svg>
<span class="t" style="left:87px;top:301px;letter-spacing:0.292px;">jp.ssie.helloworld.web</span>
<svg style="left:53px;top:326px" width="7" height="9" viewBox="0 0 7 9"><path d="M1.5 .8v7.4L5.3 4.5z" fill="#fff" stroke="#8c8c8c" stroke-width="1"/></svg>
<svg style="left:66px;top:321px" width="16" height="16" viewBox="0 0 16 16"><path d="M1.5 13.5V5.5l1.2-1.4h3.6l1.2 1.4h5v2" fill="#faeab8" stroke="#c9943c"/><path d="M1.5 14.3L4.6 7.5h10.9l-3.3 6.8z" fill="#f6d98e" stroke="#c9943c" stroke-linejoin="round"/><path d="M5.2 8.5h8.6" stroke="#fdf3d6"/></svg>
<span class="t" style="left:87px;top:322px;letter-spacing:-0.011px;">META-INF</span>
<svg style="left:34px;top:347px" width="7" height="9" viewBox="0 0 7 9"><path d="M1.5 .8v7.4L5.3 4.5z" fill="#fff" stroke="#8c8c8c" stroke-width="1"/></svg>
<svg style="left:47px;top:342px" width="16" height="16" viewBox="0 0 16 16"><path d="M1.500 14.500V7l1.200-1.400h3.600l1.200 1.400h5v2" fill="#fbeec4" stroke="#cf9a40"/><path d="M1.500 15.300L4.600 9.500h10.900l-3.300 5.800z" fill="#f8de98" stroke="#cf9a40" stroke-linejoin="round"/><rect x="8.500" y="4" width="6" height="5" fill="#ecc894" stroke="#8a5a44" stroke-width=".9"/><path d="M11.500 2.800v7M7.500 6.500h8" stroke="#6a3a2c" stroke-width="1"/><g transform="translate(0,8.400)"><path d="M3.500 .6Q4.200 .6 4.600 1.500L6.800 6q.5 1.600-1 1.600H1.200q-1.500 0-1-1.600L2.400 1.500Q2.800 .6 3.500 .6z" fill="#f6c860" stroke="#d99a3a" stroke-width=".8"/><path d="M3.500 2.300v2.700M3.500 5.800v1" stroke="#5a3208" stroke-width="1.100"/></g></svg>
<span class="t" style="left:68px;top:343px;letter-spacing:0.357px;">src/main/resources</span>
<svg style="left:47px;top:363px" width="16" height="16" viewBox="0 0 16 16"><path d="M1.500 14.500V7l1.200-1.400h3.600l1.200 1.400h5v2" fill="#fbeec4" stroke="#cf9a40"/><path d="M1.500 15.300L4.600 9.500h10.900l-3.300 5.800z" fill="#f8de98" stroke="#cf9a40" stroke-linejoin="round"/><rect x="8.500" y="4" width="6" height="5" fill="#ecc894" stroke="#8a5a44" stroke-width=".9"/><path d="M11.500 2.800v7M7.500 6.500h8" stroke="#6a3a2c" stroke-width="1"/></svg>
<span class="t" style="left:68px;top:364px;letter-spacing:0.640px;">src/test/java</span>
<svg style="left:34px;top:389px" width="7" height="9" viewBox="0 0 7 9"><path d="M1.5 .8v7.4L5.3 4.5z" fill="#fff" stroke="#8c8c8c" stroke-width="1"/></svg>
<svg style="left:47px;top:384px" width="16" height="16" viewBox="0 0 16 16"><rect x="1.5" y="5" width="7" height="2" fill="#2d6cb4"/><rect x="2" y="7" width="8" height="3.4" fill="#3fa07c"/><path d="M2 8.2h8" stroke="#7cc6a8" stroke-width=".6"/><rect x="1" y="10.4" width="10" height="4.6" fill="#d4874c"/><path d="M1 11.6h10" stroke="#e9b487" stroke-width=".7"/><path d="M9.6 3.8l2.2-.8 3.9 11.6-2.2.7z" fill="#ebb544" stroke="#c88a2a" stroke-width=".6"/></svg>
<span class="t" style="left:68px;top:385px;letter-spacing:0.198px;">JRE System Library</span>
<span class="t brown" style="left:186px;top:385px;letter-spacing:0.064px;">[J2SE-1.5]</span>
<svg style="left:34px;top:410px" width="7" height="9" viewBox="0 0 7 9"><path d="M1.5 .8v7.4L5.3 4.5z" fill="#fff" stroke="#8c8c8c" stroke-width="1"/></svg>
<svg style="left:47px;top:405px" width="16" height="16" viewBox="0 0 16 16"><rect x="1.5" y="5" width="7" height="2" fill="#2d6cb4"/><rect x="2" y="7" width="8" height="3.4" fill="#3fa07c"/><path d="M2 8.2h8" stroke="#7cc6a8" stroke-width=".6"/><rect x="1" y="10.4" width="10" height="4.6" fill="#d4874c"/><path d="M1 11.6h10" stroke="#e9b487" stroke-width=".7"/><path d="M9.6 3.8l2.2-.8 3.9 11.6-2.2.7z" fill="#ebb544" stroke="#c88a2a" stroke-width=".6"/></svg>
<span class="t" style="left:68px;top:406px;letter-spacing:0.061px;">Maven Dependencies</span>
<svg style="left:34px;top:431px" width="7" height="9" viewBox="0 0 7 9"><path d="M1.5 .8v7.4L5.3 4.5z" fill="#fff" stroke="#8c8c8c" stroke-width="1"/></svg>
<svg style="left:47px;top:426px" width="16" height="16" viewBox="0 0 16 16"><g transform="translate(1,0) scale(.93)"><path d="M1.5 13.5V5.5l1.2-1.4h3.6l1.2 1.4h5v2" fill="#faeab8" stroke="#c9943c"/><path d="M1.5 14.3L4.6 7.5h10.9l-3.3 6.8z" fill="#f6d98e" stroke="#c9943c" stroke-linejoin="round"/><path d="M5.2 8.5h8.6" stroke="#fdf3d6"/></g><g transform="translate(0,8.800)"><path d="M3.500 .6Q4.200 .6 4.600 1.500L6.800 6q.5 1.600-1 1.600H1.200q-1.500 0-1-1.600L2.400 1.500Q2.800 .6 3.500 .6z" fill="#f6c860" stroke="#d99a3a" stroke-width=".8"/><path d="M3.500 2.300v2.700M3.500 5.800v1" stroke="#5a3208" stroke-width="1.100"/></g><text transform="translate(10.700,7.400) scale(.7,1)" font-family="Liberation Sans,sans-serif" font-weight="bold" font-size="9.200" fill="#0000f0">S</text></svg>
<span class="t" style="left:68px;top:427px;letter-spacing:0.446px;">src</span>
<svg style="left:34px;top:452px" width="7" height="9" viewBox="0 0 7 9"><path d="M1.5 .8v7.4L5.3 4.5z" fill="#fff" stroke="#8c8c8c" stroke-width="1"/></svg>
<svg style="left:47px;top:447px" width="16" height="16" viewBox="0 0 16 16"><path d="M1.5 13.5V5.5l1.2-1.4h3.6l1.2 1.4h5v2" fill="#faeab8" stroke="#c9943c"/><path d="M1.5 14.3L4.6 7.5h10.9l-3.3 6.8z" fill="#f6d98e" stroke="#c9943c" stroke-linejoin="round"/><path d="M5.2 8.5h8.6" stroke="#fdf3d6"/></svg>
<span class="t" style="left:68px;top:448px;letter-spacing:0.673px;">target</span>
<svg style="left:47px;top:468px" width="16" height="16" viewBox="0 0 16 16"><defs><linearGradient id="pg3" x1="0" y1="0" x2="1" y2="1"><stop offset=".3" stop-color="#fff"/><stop offset="1" stop-color="#cfe0f5"/></linearGradient></defs><path d="M3.5 2.5h7l3 3v10h-10z" fill="url(#pg3)" stroke="#a88a3c"/><path d="M10.5 2.5v3h3" fill="#f2e2b0" stroke="#a88a3c" stroke-width=".8"/><text x="4.6" y="13.8" font-family="Liberation Sans,sans-serif" font-weight="bold" font-size="7.5" fill="#2a5f9e">M</text></svg>
<span class="t" style="left:68px;top:469px;letter-spacing:0.682px;">pom.xml</span>
<svg style="left:15px;top:494px" width="7" height="9" viewBox="0 0 7 9"><path d="M1.5 .8v7.4L5.3 4.5z" fill="#fff" stroke="#8c8c8c" stroke-width="1"/></svg>
<svg style="left:28px;top:489px" width="16" height="16" viewBox="0 0 16 16"><g transform="translate(0,-2.5)"><path d="M1.5 13.5V5.5l1.2-1.4h3.6l1.2 1.4h5v2" fill="#faeab8" stroke="#8f8f7a"/><path d="M1.5 14.3L4.6 7.5h10.9l-3.3 6.8z" fill="#8db6ee" stroke="#3f5fb0" stroke-linejoin="round"/><path d="M5.2 8.5h8.6" stroke="#c4dbf8"/></g></svg>
<span class="t" style="left:49px;top:490px;letter-spacing:0.277px;">Servers</span>
<div class="panel" style="left:3px;top:826px;width:545px;height:185px"></div>
<div class="tab" style="left:3px;top:826px;width:95px;height:27px"></div>
<svg style="left:10px;top:833px" width="16" height="16" viewBox="0 0 16 16"><path d="M2.500 2v11M6.500 2v11M10.500 2v11" stroke="#2733b5" stroke-width="1.100"/><rect x=".4" y="7.300" width="4.200" height="3.400" rx="1.500" fill="#9fbf2a" stroke="#4a8a2a" stroke-width=".7"/><path d="M1.500 8.600h2" stroke="#f4f48a" stroke-width="1"/><rect x="4.400" y="2.800" width="4.200" height="3.400" rx="1.500" fill="#d99a1c" stroke="#9a6a10" stroke-width=".7"/><path d="M5.500 4.100h2" stroke="#fbe08a" stroke-width="1"/><rect x="8.400" y="7.700" width="4.200" height="3.400" rx="1.500" fill="#79b7d6" stroke="#3a78a8" stroke-width=".7"/><path d="M9.500 9h2" stroke="#d8f0fa" stroke-width="1"/></svg>
<span class="t" style="left:28px;top:833px;letter-spacing:0.277px;">Servers</span>
<svg style="left:80px;top:836px" width="10" height="10" viewBox="0 0 10 10"><path d="M.5 .5h2.600l2 2 2-2h2.400v2.500l-2 2 2 2v2.500h-2.400l-2-2-2 2H.5v-2.500l2-2-2-2z" fill="#fff" stroke="#4a4a4a" stroke-width="1" stroke-linejoin="round"/></svg>
<svg style="left:103px;top:833px;opacity:0.6" width="16" height="16" viewBox="0 0 16 16"><path d="M.4 8.200L3.800 1.600h6.800l3.400 6.600-3.400 6.600H3.800z" fill="#3fae3f"/><path d="M5.200 5.300a3.600 3.600 0 1 0 4 0" fill="none" stroke="#eaf8ea" stroke-width="1.200"/><path d="M7.200 3.600v4.200" stroke="#eaf8ea" stroke-width="1.300"/></svg>
<span class="t dim" style="left:122px;top:833px;letter-spacing:0.191px;">Boot Dashboard</span>
<svg style="left:335px;top:833px" width="14" height="14" viewBox="0 0 14 14"><rect x=".5" y=".5" width="9.500" height="9.500" fill="#dbe7f3" stroke="#8f9fc6"/><rect x="3.500" y="3.500" width="9.500" height="9.500" fill="#e3f0f4" stroke="#8f9fc6"/><path d="M5 8.300h6.500" stroke="#103f95" stroke-width="1.300"/></svg>
<svg style="left:357px;top:832px" width="16" height="16" viewBox="0 0 16 16"><path d="M5 1l1.200 3M9.300 1.400l-.8 2.600M.8 4.600l3.600 1M1.200 9.600l3.400-.8M12 5.300l3.200-.2M12.600 9l3 1.600M5.600 12l-.4 3.400M9.300 12.700l1.600 3" stroke="#8c9a90" stroke-width="1" fill="none" stroke-linecap="round"/><ellipse cx="8.600" cy="8.600" rx="3.600" ry="4.700" transform="rotate(-38 8.600 8.600)" fill="#d5ddd2" stroke="#8a988e" stroke-width="1.100"/><circle cx="5.800" cy="5" r="1.300" fill="#8a988e"/></svg>
<svg style="left:380px;top:832px" width="14" height="15" viewBox="0 0 14 15"><circle cx="7" cy="7.500" r="6.800" fill="#b5c2b4" stroke="#a6b3a6" stroke-width=".8"/><path d="M4.800 3.500L11 7.500 4.800 11.600z" fill="#f6f8f6"/></svg>
<svg style="left:403px;top:832px" width="16" height="16" viewBox="0 0 16 16"><path d="M.5 8.500l6 3.500-6 3.500z" fill="#b9c6b8" stroke="#9aaa9a" stroke-width=".6"/><circle cx="7.500" cy="7" r="3.700" fill="#f4f4f4" stroke="#a9a9a9" stroke-width="1.100"/><path d="M7.500 4.800V7l1.600 1" stroke="#8a8a8a" fill="none" stroke-width=".9"/><path d="M6.300 2h2.400M10 2.500h5.500M11 4.500h4.500M12 6.500h3" stroke="#bdbdbd" stroke-width=".8"/></svg>
<svg style="left:426px;top:832px" width="16" height="16" viewBox="0 0 16 16"><rect x="2.600" y="3.600" width="10" height="10" fill="#c9b3bb" stroke="#dccfd0" stroke-width="1.200"/></svg>
<svg style="left:449px;top:832px" width="16" height="16" viewBox="0 0 16 16"><rect x=".5" y="3" width="7" height="12.500" fill="#ebebeb" stroke="#c2c2c2" stroke-width=".9"/><path d="M1 7h6M1 10.500h6" stroke="#bcbcbc" stroke-width=".8"/><rect x="2.500" y="4.200" width="2" height="1.500" fill="#9ab89a"/><rect x="6.500" y="2.500" width="6" height="8" fill="#f7f7f7" stroke="#ababab" stroke-width=".9"/><path d="M9 .8h4l2 2v6.400H9z" fill="#fafafa" stroke="#ababab" stroke-width=".9"/><path d="M10.500 4.500h3M10.500 6.500h3" stroke="#c8c8c8" stroke-width=".8"/></svg>
<svg style="left:480px;top:834px" width="10" height="6" viewBox="0 0 10 6"><path d="M.8 .5h8.400L5 4.600z" fill="#fff" stroke="#555" stroke-width="1" stroke-linejoin="round"/></svg>
<svg style="left:500px;top:834px" width="10" height="4" viewBox="0 0 10 4"><rect x=".5" y=".5" width="9" height="3" fill="#fff" stroke="#555"/></svg>
<svg style="left:523px;top:834px" width="10" height="10" viewBox="0 0 10 10"><rect x=".5" y=".5" width="9" height="9" fill="#fff" stroke="#555"/><path d="M1 2.500h8" stroke="#555"/></svg>
<svg style="left:15px;top:862px" width="7" height="9" viewBox="0 0 7 9"><path d="M1.5 .8v7.4L5.3 4.5z" fill="#fff" stroke="#8c8c8c" stroke-width="1"/></svg>
<svg style="left:28px;top:858px" width="16" height="16" viewBox="0 0 16 16"><path d="M7.500 1Q1 3 1.200 8.500 1.500 13 6 15q2.500-2 2-5.500T6.500 5Q6 3 7.500 1z" fill="#1d6b33"/><path d="M3 6q-.5 4 2.500 7" stroke="#3a8a4a" stroke-width=".8" fill="none"/><path d="M10.500 1.500Q8 3.500 8.300 6q.3 2 1.500 4 .8 2 .2 4.500 5-1.500 5-6.500 0-3.500-4.500-6.500z" fill="#b5d926"/><path d="M11 4v5" stroke="#d8ee6a" stroke-width=".9"/><rect x="9.8" y="9.8" width="5.600" height="5.600" rx="1" fill="#2f63b8" stroke="#1a3f8a" stroke-width=".8"/><rect x="11.2" y="11.3" width="2.800" height="2.600" fill="#dfeaf8"/></svg>
<span class="t" style="left:49px;top:858px;letter-spacing:0.294px;">Pivotal tc Server Developer Edition v3.1</span>
<span class="t brown" style="left:289px;top:858px;letter-spacing:0.248px;">[Stopped, Republish]</span>
<svg style="left:15px;top:883px" width="7" height="9" viewBox="0 0 7 9"><path d="M1.5 .8v7.4L5.3 4.5z" fill="#fff" stroke="#8c8c8c" stroke-width="1"/></svg>
<svg style="left:28px;top:879px" width="16" height="16" viewBox="0 0 16 16"><rect x="4" y="1.500" width="7.500" height="13.500" fill="#f4f4ee" stroke="#8a8a5c" stroke-width="1"/><path d="M4 5.500h7.500M4 8.500h7.500" stroke="#8a8a5c" stroke-width=".9"/><rect x="5.500" y="3" width="2.200" height="1.400" fill="#1a9a2a"/><path d="M8.500 3.700h2" stroke="#b8b8a8" stroke-width=".9"/><rect x="5" y="9.500" width="5.500" height="5" fill="#d4d8ee"/><rect x="9.8" y="10.6" width="5.600" height="5.600" rx="1" fill="#2f63b8" stroke="#1a3f8a" stroke-width=".8"/><rect x="11.2" y="12.1" width="2.800" height="2.600" fill="#dfeaf8"/></svg>
<span class="t" style="left:49px;top:879px;letter-spacing:0.407px;">Tomcat v8.0 Server at localhost</span>
<span class="t brown" style="left:244px;top:879px;letter-spacing:0.248px;">[Stopped, Republish]</span>
<div class="panel" style="left:552px;top:80px;width:868px;height:548px;border:1px solid #a9b0c9;border-top-color:#b0b4c8;background:#fff"></div>
<div style="left:553px;top:81px;width:866px;height:27px;border-radius:4px 4px 0 0;background:linear-gradient(#d3e2f1,#cfdeee 50%,#d2e1f0);border-bottom:1px solid #a9b7cf"></div>
<svg style="left:557px;top:86px" width="16" height="16" viewBox="0 0 16 16"><defs><linearGradient id="pg3" x1="0" y1="0" x2="1" y2="1"><stop offset=".3" stop-color="#fff"/><stop offset="1" stop-color="#cfe0f5"/></linearGradient></defs><path d="M3.5 2.5h7l3 3v10h-10z" fill="url(#pg3)" stroke="#a88a3c"/><path d="M10.5 2.5v3h3" fill="#f2e2b0" stroke="#a88a3c" stroke-width=".8"/><text x="4.6" y="13.8" font-family="Liberation Sans,sans-serif" font-weight="bold" font-size="7.5" fill="#2a5f9e">M</text></svg>
<span class="t" style="left:577px;top:87px;letter-spacing:0.467px;">HelloWorld/pom.xml</span>
<div style="left:723px;top:80px;width:167px;height:28px;background:#fff;border:1px solid #a9b7cf;border-top-color:#b0b4c8;border-bottom:none;border-radius:6px 6px 0 0"></div>
<svg style="left:727px;top:86px" width="16" height="16" viewBox="0 0 16 16"><defs><linearGradient id="pg" x1="0" y1="0" x2="1" y2="1"><stop offset=".3" stop-color="#fff"/><stop offset="1" stop-color="#cfe0f5"/></linearGradient></defs><path d="M3.5 2.5h7l3 3v10h-10z" fill="url(#pg)" stroke="#a88a3c"/><path d="M10.5 2.5v3h3" fill="#f2e2b0" stroke="#a88a3c" stroke-width=".8"/><path d="M9.3 4.2v6.3q0 2.4-2.4 2.4h-1" fill="none" stroke="#3b6db0" stroke-width="2"/></svg>
<span class="t" style="left:747px;top:87px;letter-spacing:0.284px;">UserRepository.java</span>
<svg style="left:871px;top:90px" width="10" height="10" viewBox="0 0 10 10"><path d="M.5 .5h2.600l2 2 2-2h2.400v2.500l-2 2 2 2v2.500h-2.400l-2-2-2 2H.5v-2.500l2-2-2-2z" fill="#fff" stroke="#4a4a4a" stroke-width="1" stroke-linejoin="round"/></svg>
<svg style="left:1372px;top:88px" width="10" height="4" viewBox="0 0 10 4"><rect x=".5" y=".5" width="9" height="3" fill="#fff" stroke="#555"/></svg>
<svg style="left:1395px;top:88px" width="10" height="10" viewBox="0 0 10 10"><rect x=".5" y=".5" width="9" height="9" fill="#fff" stroke="#555"/><path d="M1 2.500h8" stroke="#555"/></svg>
<div style="left:553px;top:108px;width:38px;height:518px;background:#f9f9f9;border-radius:0 0 0 4px"></div>
<div style="left:567px;top:110px;width:24px;height:498px;background:#fff"></div>
<div style="left:555px;top:215px;width:12px;height:60px;background:#8cc0ff;background-image:repeating-conic-gradient(#3a92ff 0 25%,#dcebff 0 50%);background-size:2px 2px;border-top:1px solid #3a92ff;border-bottom:1px solid #3a92ff"></div>
<div style="left:593px;top:275px;width:794px;height:15px;background:#e8f2fe"></div>
<div style="left:1388px;top:110px;width:16px;height:515px;background:#f0f0f0"></div>
<div style="left:1404px;top:110px;width:14px;height:515px;background:#f8f8f8"></div>
<div style="left:591px;top:609px;width:796px;height:16px;background:#ececec"></div>
<div style="left:1387px;top:607px;width:17px;height:18px;background:#f0f0f0"></div>
<svg style="left:1393px;top:117px" width="7" height="4" viewBox="0 0 7 4"><path d="M0 4L3.500 .5 7 4z" fill="#808080"/></svg>
<svg style="left:1393px;top:598px" width="7" height="4" viewBox="0 0 7 4"><path d="M0 0L3.500 3.500 7 0z" fill="#808080"/></svg>
<svg style="left:597px;top:613px" width="4" height="7" viewBox="0 0 4 7"><path d="M4 0L.5 3.500 4 7z" fill="#808080"/></svg>
<svg style="left:1377px;top:613px" width="4" height="7" viewBox="0 0 4 7"><path d="M0 0l3.500 3.500L0 7z" fill="#808080"/></svg>
<span class="ln" style="left:551px;top:112px">1</span>
<span class="code" style="left:593px;top:112px"><b>package</b> jp.ssie.helloworld.repository;</span>
<span class="ln" style="left:551px;top:127px">2</span>
<span class="ln" style="left:551px;top:142px">3</span>
<span class="code" style="left:593px;top:142px"><b>import</b> org.springframework.data.jpa.repository.JpaRepository;</span>
<span class="ln" style="left:551px;top:157px">4</span>
<span class="code" style="left:593px;top:157px"><b>import</b> org.springframework.stereotype.Repository;</span>
<span class="ln" style="left:551px;top:172px">5</span>
<span class="ln" style="left:551px;top:187px">6</span>
<span class="code" style="left:593px;top:187px"><b>import</b> jp.ssie.helloworld.model.User;</span>
<span class="ln" style="left:551px;top:202px">7</span>
<span class="ln" style="left:551px;top:217px">8</span>
<span class="code" style="left:593px;top:217px"><i>@Repository</i></span>
<span class="ln" style="left:551px;top:232px">9</span>
<span class="code" style="left:593px;top:232px"><b>public</b> <b>interface</b> UserRepository  <b>extends</b> JpaRepository&lt;User, String&gt;{</span>
<span class="ln" style="left:551px;top:247px">10</span>
<span class="ln" style="left:551px;top:262px">11</span>
<span class="code" style="left:593px;top:262px">}</span>
<span class="ln" style="left:551px;top:277px">12</span>
<div style="left:590px;top:110px;width:1px;height:498px;background:#ececec"></div>
<svg style="left:581.5px;top:143.5px" width="9" height="9" viewBox="0 0 9 9"><circle cx="4.500" cy="4.500" r="4" fill="#e1eaf4" stroke="#a3b0be" stroke-width=".9"/><path d="M2.300 4.500h4.400" stroke="#6a7684" stroke-width="1"/></svg>
<div class="panel" style="left:552px;top:632px;width:868px;height:379px"></div>
<div class="tab" style="left:552px;top:632px;width:94px;height:27px"></div>
<svg style="left:558px;top:639px" width="16" height="16" viewBox="0 0 16 16"><rect x="2" y="1.8" width="12" height="9.6" rx="1" fill="#2f5fae" stroke="#2a55a0" stroke-width=".8"/><rect x="3.6" y="3.3" width="8.8" height="6.4" fill="#f0f6ff"/><path d="M4.6 5.2h4M4.6 7.4h6.4" stroke="#2a3f8a" stroke-width="1.1"/><path d="M6.5 11.5h3v1.5h-3z" fill="#2f5fae"/><path d="M3.5 13.6h9" stroke="#2f5fae" stroke-width="1.4"/></svg>
<span class="t" style="left:577px;top:639px;letter-spacing:-0.123px;">Console</span>
<svg style="left:628px;top:642px" width="10" height="10" viewBox="0 0 10 10"><path d="M.5 .5h2.600l2 2 2-2h2.400v2.500l-2 2 2 2v2.500h-2.400l-2-2-2 2H.5v-2.500l2-2-2-2z" fill="#fff" stroke="#4a4a4a" stroke-width="1" stroke-linejoin="round"/></svg>
<svg style="left:650px;top:638px;opacity:0.85" width="16" height="16" viewBox="0 0 16 16"><path d="M1.500 1.500h12.500q1.800 3 .3 6.500t.7 7.500H1.500z" fill="#f3f7fd" stroke="#c2c6d8" stroke-width="1"/><path d="M1.500 1.500h11" stroke="#d8d2b0" stroke-width="1"/><path d="M9.700 2v13M2 8.300h12" stroke="#c6d6f0" stroke-width="1"/><circle cx="6" cy="5.300" r="2.600" fill="#ee7a82"/><circle cx="6" cy="5.300" r="1.200" fill="#f29aa0"/><path d="M3.500 15v-3.200l2.500-2.300 2.500 2.300V15z" fill="#f8bc48"/><path d="M5 13.500h2" stroke="#fde08a" stroke-width="1.400"/></svg>
<span class="t dim" style="left:671px;top:639px;letter-spacing:0.266px;">Markers</span>
<svg style="left:728px;top:639px;opacity:0.6" width="16" height="16" viewBox="0 0 16 16"><rect x=".5" y="3.500" width="7" height="4" fill="#69b568" stroke="#4a964a" stroke-width=".8"/><path d="M1.500 5h5" stroke="#b8e0b0" stroke-width="1"/><rect x="7.500" y="3.500" width="6.500" height="6" fill="#eef3fb" stroke="#9db3d6" stroke-width=".8"/><circle cx="10.800" cy="11.300" r="3.400" fill="#3fa53f" stroke="#2a8a2a" stroke-width=".6"/><path d="M9.700 9.500l3 1.800-3 1.800z" fill="#fff"/></svg>
<span class="t dim" style="left:747px;top:639px;letter-spacing:-0.002px;">Progress</span>
<svg style="left:805px;top:638px;opacity:0.85" width="16" height="16" viewBox="0 0 16 16"><path d="M1.500 1.500h12.500q1.800 3 .3 6.500t.7 7.500H1.500z" fill="#f3f7fd" stroke="#c2c6d8" stroke-width="1"/><path d="M1.500 1.500h11" stroke="#d8d2b0" stroke-width="1"/><path d="M9.700 2v13M2 8.300h12" stroke="#c6d6f0" stroke-width="1"/><circle cx="6" cy="5.300" r="2.600" fill="#ee7a82"/><circle cx="6" cy="5.300" r="1.200" fill="#f29aa0"/><g transform="translate(.3,8.200) scale(.95)" opacity=".7"><path d="M3.500 .6Q4.200 .6 4.600 1.500L6.800 6q.5 1.600-1 1.600H1.200q-1.500 0-1-1.600L2.400 1.500Q2.800 .6 3.500 .6z" fill="#f6c860" stroke="#d99a3a" stroke-width=".8"/><path d="M3.500 2.300v2.700M3.500 5.800v1" stroke="#5a3208" stroke-width="1.100"/></g></svg>
<span class="t dim" style="left:826px;top:639px;letter-spacing:0.151px;">Problems</span>
<svg style="left:1036px;top:637px" width="16" height="16" viewBox="0 0 16 16"><rect x="2.500" y="3.500" width="10.500" height="10.500" rx="1.500" fill="#b4b4b4" stroke="#d4d4d4" stroke-width="1.200"/></svg>
<svg style="left:1058px;top:637px" width="16" height="16" viewBox="0 0 16 16"><path d="M3.500 3.500l9 9M12.500 3.500l-9 9" stroke="#5e5e5e" stroke-width="3.600" stroke-linecap="round"/></svg>
<svg style="left:1081px;top:637px" width="16" height="16" viewBox="0 0 16 16"><path d="M2.500 2l6.500 6.500M9 2L2.500 8.500" stroke="#8e8e8e" stroke-width="3.400" stroke-linecap="round"/><path d="M2.500 2l6.500 6.500M9 2L2.500 8.500" stroke="#d0d0d0" stroke-width="2.200" stroke-linecap="round"/><path d="M7 7l7.500 7.500M14.500 7L7 14.500" stroke="#6a6a6a" stroke-width="3.300" stroke-linecap="round"/></svg>
<div class="sep" style="left:1103px;top:636px;height:18px"></div>
<svg style="left:1112px;top:637px" width="16" height="16" viewBox="0 0 16 16"><path d="M1.500 .5h6.500l3 3v11h-9.500z" fill="#f4f4f4" stroke="#cfcfcf" stroke-width=".9"/><path d="M3 3.500h4M3 5.500h6M3 7.500h6M3 9.500h6M3 11.500h4" stroke="#c9c9c9" stroke-width=".9"/><path d="M9.500 9.500l5.500 5.500M15 9.500L9.500 15" stroke="#c0c0c0" stroke-width="2.200" stroke-linecap="round"/></svg>
<svg style="left:1135px;top:637px" width="16" height="16" viewBox="0 0 16 16"><rect x="1.500" y="1.500" width="13.500" height="13" fill="#eaf3fc" stroke="#b8a468" stroke-width=".9"/><rect x="11" y="1.500" width="4" height="13" fill="#dfe9f8" stroke="#6a8ac8" stroke-width=".8"/><rect x="11.800" y="5.500" width="2.400" height="4.500" fill="#f8f8fc" stroke="#8a9ac8" stroke-width=".6"/><path d="M13 3.300h.01M13 12.500h.01" stroke="#2a4a9a" stroke-width="1.300" stroke-linecap="square"/><path d="M2.500 9.500V8q0-2.500 2.800-2.500T8 8v1.500" fill="none" stroke="#8a6a1a" stroke-width="1.300"/><rect x="1" y="9" width="8.500" height="6.500" rx="1" fill="#e5a92a" stroke="#a87a14" stroke-width=".8"/><path d="M2 11h6.500" stroke="#f8d878" stroke-width="1.200"/></svg>
<svg style="left:1158px;top:637px" width="16" height="16" viewBox="0 0 16 16"><path d="M1.500 .8h7.500l3 3v10.700H1.500z" fill="#fbfbf4" stroke="#c9b46c" stroke-width=".9"/><path d="M3 4h5M3 6.500h5M3 9h4M3 11.500h5" stroke="#5a7ac0" stroke-width="1"/><path d="M14.500 3.500v6.500h-6" fill="none" stroke="#d9a43a" stroke-width="2.600"/><path d="M14.500 3.500v6.500h-6" fill="none" stroke="#fbe7a6" stroke-width="1.100"/><path d="M9.500 6.800L6 10l3.500 3.200z" fill="#fbe7a6" stroke="#d9a43a" stroke-width=".8"/></svg>
<div style="left:1178px;top:635px;width:23px;height:20px;border:1px solid #6d6d6d;border-radius:3px;background:linear-gradient(#e0e0e4,#f0f0f4)"></div>
<div style="left:1201px;top:635px;width:23px;height:20px;border:1px solid #6d6d6d;border-radius:3px;background:linear-gradient(#e0e0e4,#f0f0f4)"></div>
<svg style="left:1182px;top:637px" width="16" height="16" viewBox="0 0 16 16"><rect x="1" y="7" width="7" height="5.500" fill="#f4f8ff" stroke="#2a64b8" stroke-width="1.300"/><path d="M3.500 13v1.500M1.500 15h6" stroke="#2a64b8" stroke-width="1.300"/><rect x="4.500" y=".8" width="10.500" height="8" fill="#f4f8ff" stroke="#3a78cc" stroke-width="1.300"/><path d="M6.500 3.500h6.500M6.500 6h4.500" stroke="#4a6ab8" stroke-width="1"/></svg>
<svg style="left:1205px;top:637px" width="16" height="16" viewBox="0 0 16 16"><rect x="1" y="7" width="7" height="5.500" fill="#f4f8ff" stroke="#2a64b8" stroke-width="1.300"/><path d="M3.500 13v1.500M1.500 15h6" stroke="#2a64b8" stroke-width="1.300"/><rect x="4.500" y=".8" width="10.500" height="8" fill="#f4f8ff" stroke="#3a78cc" stroke-width="1.300"/><path d="M6.300 2.800l3.400 3.400M9.700 2.800L6.300 6.200" stroke="#e0303a" stroke-width="1.500"/><path d="M11 3.500h2.500M11 5.800h2.500" stroke="#4a6ab8" stroke-width="1"/></svg>
<div class="sep" style="left:1226px;top:636px;height:18px"></div>
<svg style="left:1236px;top:637px" width="16" height="16" viewBox="0 0 16 16"><rect x="1.500" y="5" width="12" height="9.500" fill="#f2f8ff" stroke="#9aaed0" stroke-width=".9"/><rect x="1.500" y="5" width="12" height="2.400" fill="#3d8fd6"/><path d="M10.500 7.500L7 11.500" stroke="#555" stroke-width="1"/><path d="M9 4.500l3.500-3 3 2.800-3.500 3z" fill="#2fa23c" stroke="#1a7a28" stroke-width=".6"/><circle cx="12.700" cy="3" r="1.500" fill="#6cd07a"/></svg>
<svg style="left:1260px;top:637px" width="16" height="16" viewBox="0 0 16 16"><rect x="1.500" y="1" width="12" height="10" fill="#aaaaaa"/><rect x="3.300" y="2.800" width="8.400" height="6.400" fill="#efefef"/><path d="M4.500 4.800h4.500M4.500 7h6" stroke="#9a9a9a" stroke-width="1"/><path d="M6 11.500h3v1.300H6z" fill="#aaa"/><path d="M3 13.500h9" stroke="#aaa" stroke-width="1.400"/></svg>
<svg style="left:1283px;top:643px" width="7" height="4" viewBox="0 0 7 4"><path d="M0 0h7L3.5 4z" fill="#8a8a8a"/></svg>
<svg style="left:1299px;top:637px" width="16" height="16" viewBox="0 0 16 16"><defs><linearGradient id="nw2" x1="0" y1="0" x2="1" y2="1"><stop offset="0" stop-color="#fff"/><stop offset="1" stop-color="#d6e8fa"/></linearGradient></defs><rect x="1.500" y="3" width="12.500" height="11.500" fill="url(#nw2)" stroke="#b89a46"/><rect x="2" y="3" width="9" height="2.200" fill="#3d9bdb"/><path d="M5 14.500q7-.5 9-7" fill="none" stroke="#efd27a" stroke-width="1.300"/><path d="M12.300 .5l1 2.500 2.500 1-2.500 1-1 2.500-1-2.500-2.500-1 2.500-1z" fill="#fbf0c4" stroke="#d0a840" stroke-width=".7"/></svg>
<svg style="left:1323px;top:643px" width="7" height="4" viewBox="0 0 7 4"><path d="M0 0h7L3.5 4z" fill="#1a1a1a"/></svg>
<div class="sep" style="left:1337px;top:636px;height:18px"></div>
<svg style="left:1345px;top:637px" width="16" height="16" viewBox="0 0 16 16"><path d="M13.800 4.200A6.800 6.800 0 1 0 13.800 11.800" fill="none" stroke="#1414f0" stroke-width="1.100"/><path d="M4.300 13.500L8.300 2.500h.8l4 11M5.800 9.800h5.800" fill="none" stroke="#f01010" stroke-width="1.500"/></svg>
<svg style="left:1372px;top:640px" width="10" height="4" viewBox="0 0 10 4"><rect x=".5" y=".5" width="9" height="3" fill="#fff" stroke="#555"/></svg>
<svg style="left:1395px;top:640px" width="10" height="10" viewBox="0 0 10 10"><rect x=".5" y=".5" width="9" height="9" fill="#fff" stroke="#555"/><path d="M1 2.500h8" stroke="#555"/></svg>
<span class="t" style="left:556px;top:663px;letter-spacing:0.374px;">&lt;terminated&gt; C:¥Program Files¥Java¥jdk1.8.0_45¥bin¥javaw.exe (2016/05/26 11:01:00)</span>
<div style="left:555px;top:680px;width:862px;height:1px;background:#a0a0a0"></div>
<div style="left:1401px;top:682px;width:16px;height:326px;background:#f0f0f0"></div>
<div style="left:555px;top:992px;width:845px;height:16px;background:#ececec"></div>
<svg style="left:1406px;top:689px" width="7" height="4" viewBox="0 0 7 4"><path d="M0 4L3.500 .5 7 4z" fill="#808080"/></svg>
<svg style="left:1406px;top:981px" width="7" height="4" viewBox="0 0 7 4"><path d="M0 0L3.500 3.500 7 0z" fill="#808080"/></svg>
<svg style="left:561px;top:996px" width="4" height="7" viewBox="0 0 4 7"><path d="M4 0L.5 3.500 4 7z" fill="#808080"/></svg>
<svg style="left:1390px;top:996px" width="4" height="7" viewBox="0 0 4 7"><path d="M0 0l3.500 3.500L0 7z" fill="#808080"/></svg>
<div class="panel" style="left:1424px;top:80px;width:493px;height:464px"></div>
<div class="tab" style="left:1424px;top:80px;width:91px;height:27px"></div>
<svg style="left:1430px;top:88px" width="16" height="16" viewBox="0 0 16 16"><defs><linearGradient id="ob" x1="0" y1="0" x2="0" y2="1"><stop offset="0" stop-color="#fff"/><stop offset="1" stop-color="#8cc0f0"/></linearGradient></defs><rect x=".5" y=".8" width="5" height="5" fill="url(#ob)" stroke="#1f6cb8"/><rect x=".5" y="9.800" width="5" height="5" fill="url(#ob)" stroke="#1f6cb8"/><path d="M7.500 3.500h6M7.500 12.500h6M11.500 8h2" stroke="#2a78c0" stroke-width="1"/><rect x="7.800" y="6.800" width="2.200" height="2.200" fill="#fff" stroke="#1f6cb8" stroke-width=".8"/></svg>
<span class="t" style="left:1449px;top:87px;letter-spacing:0.199px;">Outline</span>
<svg style="left:1497px;top:90px" width="10" height="10" viewBox="0 0 10 10"><path d="M.5 .5h2.600l2 2 2-2h2.400v2.500l-2 2 2 2v2.500h-2.400l-2-2-2 2H.5v-2.500l2-2-2-2z" fill="#fff" stroke="#4a4a4a" stroke-width="1" stroke-linejoin="round"/></svg>
<svg style="left:1681px;top:86px" width="16" height="16" viewBox="0 0 16 16"><circle cx="5.200" cy="5" r="3.600" fill="#ebebeb" stroke="#d8d8d8" stroke-width=".6"/><path d="M3.200 4.400h3.400" stroke="#b8b8b8"/><circle cx="11" cy="7" r="3.400" fill="#a9a9a9"/><circle cx="10.300" cy="5.800" r="1.500" fill="#c4c4c4"/><circle cx="5.500" cy="11.500" r="3.800" fill="#a2a2a2"/><path d="M3.500 9.300q2-1.500 4 0" stroke="#e4e4e4" stroke-width="1.200" fill="none"/></svg>
<svg style="left:1704px;top:87px" width="14" height="14" viewBox="0 0 14 14"><rect x=".5" y=".5" width="9.500" height="9.500" fill="#dbe7f3" stroke="#8f9fc6"/><rect x="3.500" y="3.500" width="9.500" height="9.500" fill="#e3f0f4" stroke="#8f9fc6"/><path d="M5 8.300h6.500" stroke="#103f95" stroke-width="1.300"/></svg>
<svg style="left:1724px;top:85px" width="17" height="17" viewBox="0 0 17 17"><path d="M2.500 1.500v11M.3 10.500l2.200 3 2.200-3z" stroke="#2d6a8a" fill="#2d6a8a" stroke-width="1"/><text x="5" y="7.800" font-family="Liberation Serif,serif" font-weight="bold" font-size="12" fill="#118a5a">a</text><text x="9.500" y="16" font-family="Liberation Serif,serif" font-weight="bold" font-size="12" fill="#9a2a9a">z</text></svg>
<svg style="left:1749px;top:85px" width="16" height="16" viewBox="0 0 16 16"><circle cx="7.500" cy="8.500" r="5.600" fill="#38a0e6"/><circle cx="6.500" cy="7" r="3" fill="#7cc8f8" opacity=".6"/><path d="M5.500 6.500h4.500M7.700 6.500v5M5.500 6.500v1M10 6.500v1" stroke="#fff" stroke-width="1.200" fill="none"/><path d="M.5 1.500L14.500 15" stroke="#1d2c92" stroke-width="1.400"/></svg>
<svg style="left:1773px;top:85px" width="16" height="16" viewBox="0 0 16 16"><circle cx="6" cy="10" r="3.400" fill="#a8a8a8"/><circle cx="5.300" cy="9" r="1.500" fill="#cdcdcd"/><path d="M.5 4L11.500 15" stroke="#1d2c92" stroke-width="1.400"/><text x="9" y="6.500" font-family="Liberation Sans,sans-serif" font-weight="bold" font-size="7.500" fill="#2a6ab0">S</text></svg>
<svg style="left:1797px;top:88px" width="10" height="10" viewBox="0 0 10 10"><circle cx="5" cy="5" r="4" fill="#3f9a46"/><ellipse cx="5" cy="3.800" rx="2.600" ry="1.600" fill="#7cc67f"/></svg>
<svg style="left:1818px;top:85px" width="16" height="16" viewBox="0 0 16 16"><circle cx="6" cy="10" r="3.400" fill="#a8a8a8"/><circle cx="5.300" cy="9" r="1.500" fill="#cdcdcd"/><path d="M.5 4L11.500 15" stroke="#1d2c92" stroke-width="1.400"/><text x="9.500" y="6.500" font-family="Liberation Sans,sans-serif" font-weight="bold" font-size="7.500" fill="#2a6ab0">L</text></svg>
<svg style="left:1849px;top:88px" width="10" height="6" viewBox="0 0 10 6"><path d="M.8 .5h8.400L5 4.600z" fill="#fff" stroke="#555" stroke-width="1" stroke-linejoin="round"/></svg>
<svg style="left:1869px;top:88px" width="10" height="4" viewBox="0 0 10 4"><rect x=".5" y=".5" width="9" height="3" fill="#fff" stroke="#555"/></svg>
<svg style="left:1892px;top:88px" width="10" height="10" viewBox="0 0 10 10"><rect x=".5" y=".5" width="9" height="9" fill="#fff" stroke="#555"/><path d="M1 2.500h8" stroke="#555"/></svg>
<svg style="left:1455px;top:111px" width="16" height="16" viewBox="0 0 16 16"><rect x="3" y="4" width="11" height="11" fill="#d3d0a0" stroke="#a8a680"/><rect x="4" y="5" width="4" height="4" fill="#e6e4be"/><rect x="9" y="5" width="4" height="4" fill="#e6e4be"/><rect x="4" y="10" width="4" height="4" fill="#e6e4be"/><rect x="9" y="10" width="4" height="4" fill="#e6e4be"/><path d="M8.500 3v13M2 9.500h13" stroke="#7c7a52" stroke-width="1.100"/></svg>
<span class="t" style="left:1482px;top:112px;letter-spacing:0.292px;">jp.ssie.helloworld.repository</span>
<div style="left:1453px;top:131px;width:121px;height:20px;border:1px solid #d0d0d0;border-radius:3px;background:linear-gradient(#f6f6f6,#e9e9e9)"></div>
<svg style="left:1455px;top:132px" width="16" height="16" viewBox="0 0 16 16"><circle cx="7.400" cy="7.500" r="6.600" fill="#5b41a3"/><circle cx="6.500" cy="5.500" r="4" fill="#7a62c0" opacity=".5"/><path d="M4.800 4h5.200v1.400h-1.700v4.200H10V11H4.800V9.600h1.700V5.400H4.800z" fill="#fff"/></svg>
<span class="t" style="left:1482px;top:133px;letter-spacing:0.205px;">UserRepository</span>
<div class="panel" style="left:1424px;top:548px;width:493px;height:463px"></div>
<svg style="left:1430px;top:554px;opacity:0.55" width="16" height="16" viewBox="0 0 16 16"><path d="M1.500 11.500q-1-6 5-9.500 4-2 8.500-.8-.6 5.500-4.500 8-4 2.300-7.500.8z" fill="#a6d36a"/><path d="M.8 13l8-7" stroke="#e39a5a" stroke-width="1.100"/><path d="M8.500 10v5h3M8.500 12h3" stroke="#e08a4a" fill="none" stroke-width=".9"/><rect x="11.200" y="10.500" width="3" height="2.200" fill="#fff" stroke="#e08a4a" stroke-width=".8"/><rect x="11.200" y="13.700" width="3" height="2.200" fill="#fff" stroke="#e08a4a" stroke-width=".8"/></svg>
<span class="t dim" style="left:1449px;top:555px;letter-spacing:0.190px;">Spring Explorer</span>
<div class="tab" style="left:1543px;top:548px;width:174px;height:27px"></div>
<svg style="left:1547px;top:554px" width="16" height="16" viewBox="0 0 16 16"><path d="M.8 2.500L4 1l3.500 1.800L11 1v4.500L7.500 14 4 12.300.8 14z" fill="#8fbf2a" stroke="#6a8a1a" stroke-width=".8"/><path d="M4 1v11.300M7.500 2.800V14" stroke="#6a8a1a" stroke-width=".8"/><path d="M2 6.500q3 2 5.500 0t3.500.5" stroke="#2a6ad0" stroke-width="1.300" fill="none"/><rect x="10" y="4.800" width="5.500" height="10.500" fill="#fff" stroke="#6a6a4a" stroke-width=".9"/><path d="M10.500 8.300h4.500M10.500 11.800h4.500" stroke="#6a6a4a" stroke-width=".8"/><rect x="11.500" y="6" width="2.500" height="1.400" fill="#d04040"/><rect x="11.500" y="9.400" width="2.500" height="1.400" fill="#60a040"/><rect x="11.500" y="12.900" width="2.500" height="1.400" fill="#8a8a6a"/></svg>
<span class="t" style="left:1567px;top:555px;letter-spacing:0.225px;">Data Source Explorer</span>
<svg style="left:1697px;top:558px" width="10" height="10" viewBox="0 0 10 10"><path d="M.5 .5h2.600l2 2 2-2h2.400v2.500l-2 2 2 2v2.500h-2.400l-2-2-2 2H.5v-2.500l2-2-2-2z" fill="#fff" stroke="#4a4a4a" stroke-width="1" stroke-linejoin="round"/></svg>
<svg style="left:1869px;top:556px" width="10" height="4" viewBox="0 0 10 4"><rect x=".5" y=".5" width="9" height="3" fill="#fff" stroke="#555"/></svg>
<svg style="left:1892px;top:556px" width="10" height="10" viewBox="0 0 10 10"><rect x=".5" y=".5" width="9" height="9" fill="#fff" stroke="#555"/><path d="M1 2.500h8" stroke="#555"/></svg>
<svg style="left:1726px;top:583px" width="14" height="14" viewBox="0 0 14 14"><rect x=".5" y=".5" width="9.500" height="9.500" fill="#dbe7f3" stroke="#8f9fc6"/><rect x="3.500" y="3.500" width="9.500" height="9.500" fill="#e3f0f4" stroke="#8f9fc6"/><path d="M5 8.300h6.500" stroke="#103f95" stroke-width="1.300"/></svg>
<svg style="left:1748px;top:582px" width="16" height="16" viewBox="0 0 16 16"><path d="M.8 4L4.800 .5v2h6.700v3H4.800v2z" fill="#fdf0c0" stroke="#d09422" stroke-width="1" stroke-linejoin="round"/><path d="M15.200 11.500L11.200 8v2H4.500v3h6.700v2z" fill="#fdf0c0" stroke="#d09422" stroke-width="1" stroke-linejoin="round"/></svg>
<div style="left:1768px;top:579px;width:23px;height:20px;border:1px solid #6d6d6d;border-radius:3px;background:linear-gradient(#e0e0e4,#f0f0f4)"></div>
<svg style="left:1775px;top:583px" width="10" height="14" viewBox="0 0 10 14"><path d="M2 1.500h6M2 1.500v10h4M2 6.500h4" fill="none" stroke="#5a7ab8" stroke-width="1"/><rect x=".5" y=".3" width="2.600" height="2.600" fill="#e8f0fa" stroke="#4a6ab0" stroke-width=".8"/><rect x="6" y="5.200" width="2.600" height="2.600" fill="#c8d8f0" stroke="#4a6ab0" stroke-width=".8"/><rect x="6" y="10.200" width="2.600" height="2.600" fill="#c8d8f0" stroke="#4a6ab0" stroke-width=".8"/></svg>
<svg style="left:1794px;top:581px" width="16" height="16" viewBox="0 0 16 16"><path d="M.5 7h5q1.500-2.500 4-2.500 2 0 3 1.500l2.500-.3v2.600H12q-1.500 2.700-4 2.700-2.200 0-3.200-2H.5z" fill="#e9ad1c" stroke="#9a6a0a" stroke-width=".8"/><circle cx="8" cy="8" r="1.600" fill="#fff3c0" stroke="#9a6a0a" stroke-width=".7"/><path d="M12.500 0v5M10 2.500h5" stroke="#d0a020" stroke-width="1.300"/></svg>
<svg style="left:1817px;top:581px" width="16" height="16" viewBox="0 0 16 16"><path d="M.8 6.500h3.400v5h7.600v-5h3.400v9H.8z" fill="#a9bfe4" stroke="#4a6db4" stroke-width="1"/><path d="M1.500 13.500h13" stroke="#d8e4f6" stroke-width="1"/><path d="M2.500 .5l6 7.500" stroke="#20309a" stroke-width="1.100"/><path d="M9.500 9.500l-3.500-.8 2.800-2.300z" fill="#2a5ac0" stroke="#20309a" stroke-width=".5"/></svg>
<svg style="left:1840px;top:581px" width="16" height="16" viewBox="0 0 16 16"><path d="M.8 6.500h3.400v5h7.600v-5h3.400v9H.8z" fill="#a9bfe4" stroke="#4a6db4" stroke-width="1"/><path d="M1.500 13.500h13" stroke="#d8e4f6" stroke-width="1"/><path d="M6.500 9.500l6-7.500" stroke="#20309a" stroke-width="1.100"/><path d="M13.500 .5l-.7 3.600-2.800-2.300z" fill="#2a5ac0" stroke="#20309a" stroke-width=".5"/></svg>
<svg style="left:1864px;top:581px" width="16" height="16" viewBox="0 0 16 16"><rect x="1.500" y="1.500" width="11" height="13.500" fill="#5f9de0" stroke="#2f63b4" stroke-width="1"/><rect x="3.500" y="1.500" width="7" height="5.500" fill="#8fd0c8"/><path d="M5 4.300h4" stroke="#fff" stroke-width="1"/><rect x="4" y="9" width="10.500" height="6.500" fill="#f8f8fc" stroke="#9a8a5a" stroke-width=".8"/><path d="M5.500 11h7.500M5.500 13.300h5" stroke="#7a9ad0" stroke-width=".9"/></svg>
<svg style="left:1895px;top:584px" width="10" height="6" viewBox="0 0 10 6"><path d="M.8 .5h8.400L5 4.600z" fill="#fff" stroke="#555" stroke-width="1" stroke-linejoin="round"/></svg>
<svg style="left:1436px;top:607px" width="7" height="7" viewBox="0 0 7 7"><path d="M5.700 .6v5.100H.6z" fill="#3a3a3a" stroke="#262626" stroke-width=".6" stroke-linejoin="round"/></svg>
<svg style="left:1449px;top:601px" width="16" height="16" viewBox="0 0 16 16"><path d="M1.5 13.5V5.5l1.2-1.4h3.6l1.2 1.4h5v2" fill="#faeab8" stroke="#c9943c"/><path d="M1.5 14.3L4.6 7.5h10.9l-3.3 6.8z" fill="#f6d98e" stroke="#c9943c" stroke-linejoin="round"/><path d="M5.2 8.5h8.6" stroke="#fdf3d6"/></svg>
<span class="t" style="left:1470px;top:602px;letter-spacing:0.127px;">Database Connections</span>
<svg style="left:1455px;top:627px" width="7" height="9" viewBox="0 0 7 9"><path d="M1.5 .8v7.4L5.3 4.5z" fill="#fff" stroke="#8c8c8c" stroke-width="1"/></svg>
<svg style="left:1467px;top:622px" width="16" height="16" viewBox="0 0 16 16"><path d="M2.300 4v9q0 2.800 6.700 2.800T15.700 13V4" fill="#c2c2c2" stroke="#8c8c8c" stroke-width=".8"/><path d="M11.500 5v10.500" stroke="#ededed" stroke-width="2.200" opacity=".75"/><path d="M2.300 7.200q0 2.600 6.700 2.600T15.700 7.200M2.300 10.200q0 2.600 6.700 2.600T15.700 10.200" fill="none" stroke="#8a8a8a" stroke-width=".8"/><path d="M7 8.300h2M7 11.300h2M7 14.300h2" stroke="#d8d090" stroke-width="1"/><ellipse cx="9" cy="4" rx="6.700" ry="2.900" fill="#b7dcdc" stroke="#909090" stroke-width=".8"/><path d="M6.800 4.200l1.600 1.200 3-2.800" stroke="#f2a8b0" stroke-width="1.100" fill="none"/><path d="M.6 9.600h4.400v3.200h2.600v2.400H2.600v-3.200h-2z" fill="#f7e11c" stroke="#5a2a4a" stroke-width=".8"/></svg>
<span class="t" style="left:1489px;top:623px;letter-spacing:0.284px;">MySQL (MySQL v. 5.6.0)</span>
<svg style="left:1455px;top:648px" width="7" height="9" viewBox="0 0 7 9"><path d="M1.5 .8v7.4L5.3 4.5z" fill="#fff" stroke="#8c8c8c" stroke-width="1"/></svg>
<svg style="left:1467px;top:643px" width="16" height="16" viewBox="0 0 16 16"><path d="M2.300 4v9q0 2.800 6.700 2.800T15.700 13V4" fill="#c2c2c2" stroke="#8c8c8c" stroke-width=".8"/><path d="M11.500 5v10.500" stroke="#ededed" stroke-width="2.200" opacity=".75"/><path d="M2.300 7.200q0 2.600 6.700 2.600T15.700 7.200M2.300 10.200q0 2.600 6.700 2.600T15.700 10.200" fill="none" stroke="#8a8a8a" stroke-width=".8"/><path d="M7 8.300h2M7 11.300h2M7 14.300h2" stroke="#d8d090" stroke-width="1"/><ellipse cx="9" cy="4" rx="6.700" ry="2.900" fill="#b7dcdc" stroke="#909090" stroke-width=".8"/><path d="M6.800 4.200l1.600 1.200 3-2.800" stroke="#f2a8b0" stroke-width="1.100" fill="none"/><path d="M.6 9.600h4.400v3.200h2.600v2.400H2.600v-3.200h-2z" fill="#f7e11c" stroke="#5a2a4a" stroke-width=".8"/></svg>
<span class="t" style="left:1489px;top:644px;letter-spacing:0.299px;">New MySQL (MySQL v. 5.6.0)</span>
<svg style="left:1437px;top:669px" width="7" height="9" viewBox="0 0 7 9"><path d="M1.5 .8v7.4L5.3 4.5z" fill="#fff" stroke="#8c8c8c" stroke-width="1"/></svg>
<svg style="left:1449px;top:664px" width="16" height="16" viewBox="0 0 16 16"><path d="M1.5 13.5V5.5l1.2-1.4h3.6l1.2 1.4h5v2" fill="#faeab8" stroke="#c9943c"/><path d="M1.5 14.3L4.6 7.5h10.9l-3.3 6.8z" fill="#f6d98e" stroke="#c9943c" stroke-linejoin="round"/><path d="M5.2 8.5h8.6" stroke="#fdf3d6"/></svg>
<span class="t" style="left:1470px;top:665px;letter-spacing:0.150px;">ODA Data Sources</span>
<div class="sep" style="left:942px;top:1014px;height:21px;background:#a8acb8"></div>
<div class="sep" style="left:1121px;top:1014px;height:21px;background:#a8acb8"></div>
<div class="sep" style="left:1289px;top:1014px;height:21px;background:#a8acb8"></div>
<span class="t" style="left:950px;top:1017px;letter-spacing:0.651px;font-size:12px;">Writable</span>
<span class="t" style="left:1129px;top:1017px;letter-spacing:0.888px;font-size:12px;">Smart Insert</span>
<span class="t" style="left:1298px;top:1017px;letter-spacing:0.497px;font-size:12px;">12 : 1</span>
<div class="hsep" style="left:1455px;top:1019.500px;height:16px"></div>
</body></html>
